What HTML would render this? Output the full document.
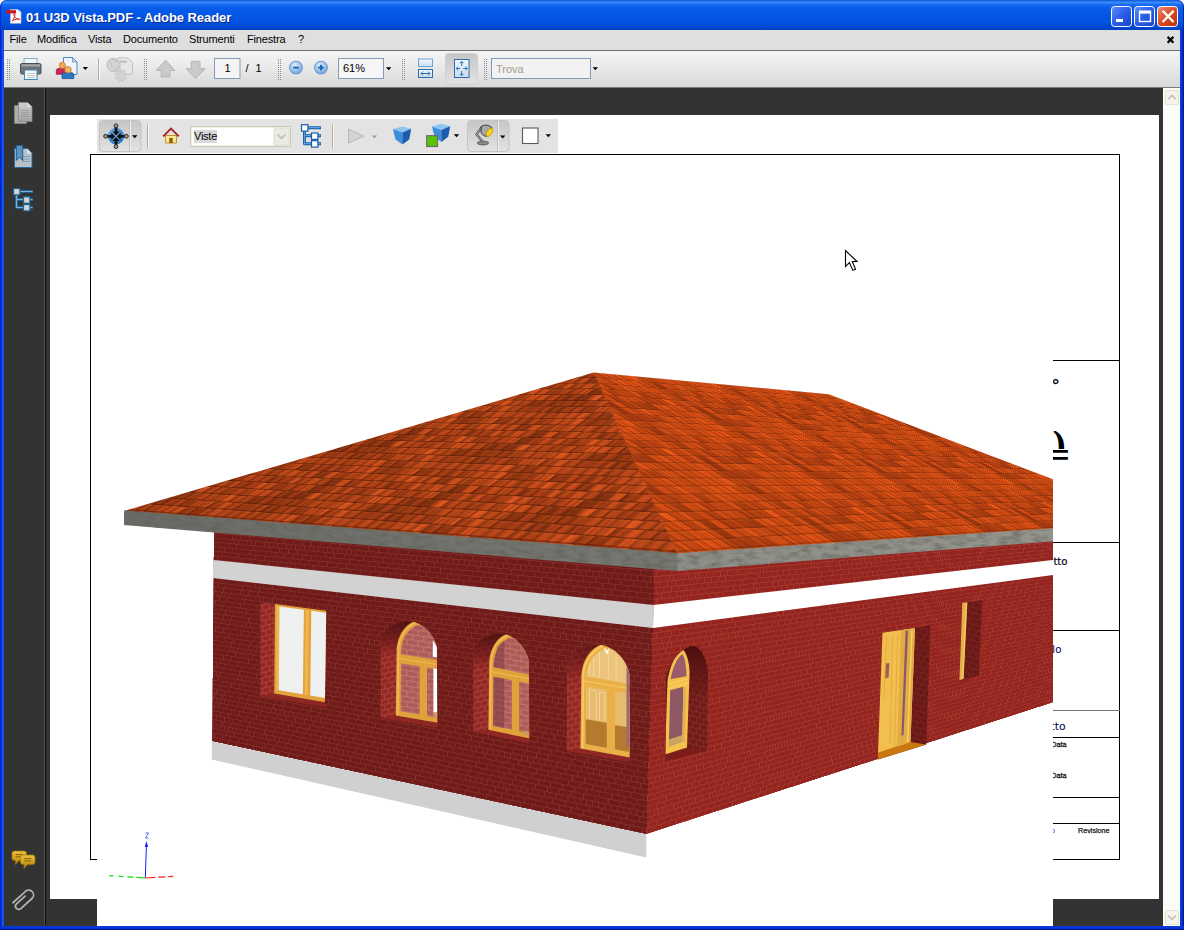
<!DOCTYPE html>
<html lang="it">
<head>
<meta charset="utf-8">
<title>01 U3D Vista.PDF - Adobe Reader</title>
<style>
*{box-sizing:border-box;margin:0;padding:0}
html,body{width:1184px;height:930px;overflow:hidden;background:#0a2fd8}
body{position:relative;font-family:"Liberation Sans",sans-serif;font-size:11px;color:#000}
.abs{position:absolute}
#titlebar{left:0;top:0;width:1184px;height:30px;border-radius:7px 7px 0 0;box-shadow:inset 1px 0 0 #0a2fd0,inset -1px 0 0 #0624b0;
 background:linear-gradient(#0b55d8 0%,#3a8efa 8%,#1a6cf2 15%,#075ce9 26%,#0356e6 50%,#0353e2 72%,#0249d2 90%,#0140c0 100%)}
#title{left:26px;top:9.5px;color:#fff;font-weight:bold;font-size:13px;line-height:16px;white-space:nowrap;text-shadow:1px 1px 0 #0a2a8a;letter-spacing:-.07px}
#lb{left:0;top:30px;width:4px;height:900px;background:linear-gradient(90deg,#0019cf,#0831d9 40%,#166aee 70%,#0a3fd6)}
#rb{left:1180px;top:30px;width:4px;height:900px;background:linear-gradient(90deg,#0a3fd6,#0831d9 50%,#00138c)}
#bb{left:0;top:926px;width:1184px;height:4px;background:linear-gradient(#0a3fd6,#0831d9 50%,#00138c)}
#menubar{left:4px;top:30px;width:1176px;height:20px;background:#dfdfdf}
.mi{position:absolute;top:33px;font-size:11px;line-height:13px;white-space:nowrap;color:#000;letter-spacing:-.16px}
#tbline{left:4px;top:50px;width:1176px;height:1px;background:#6e6e6e}
#toolbar{left:4px;top:51px;width:1176px;height:36px;border-bottom:0;background:linear-gradient(#f4f4f4 0%,#eeeeee 30%,#e2e2e2 70%,#d9d9d9 100%)}
#work{left:4px;top:88px;width:1159px;height:838px;background:#333333}
#navsep1{left:44px;top:88px;width:1px;height:838px;background:#505050}
#navsep2{left:45px;top:88px;width:1px;height:838px;background:#0c0c0c}
#vscroll{left:1163px;top:88px;width:17px;height:838px;background:#fcfcf7}
#page{left:50px;top:115px;width:1109px;height:784px;background:#fff}
.ln{position:absolute;background:#000}
#view3d{left:97px;top:155px;width:956px;height:771px;background:#fff;overflow:hidden}
#v3in{position:absolute;left:-97px;top:-155px;width:1184px;height:930px}
#tb3d{left:97px;top:119px;width:461px;height:34px;background:#e3e3e3}
.grip{position:absolute;width:3px;height:22px;background-image:radial-gradient(circle at 1px 1px,#9a9a9a 0.7px,transparent 1.1px);background-size:2px 2px}
</style>
</head>
<body>
<div class="abs" style="left:0;top:0;width:9px;height:9px;background:#fff"></div><div class="abs" style="left:1175px;top:0;width:9px;height:9px;background:#fff"></div>
<div id="titlebar" class="abs"></div>
<div id="lb" class="abs"></div><div id="rb" class="abs"></div><div id="bb" class="abs"></div>
<div id="title" class="abs">01 U3D Vista.PDF - Adobe Reader</div>
<!--TITLEBTNS-->
<div id="menubar" class="abs"></div>
<span class="mi" style="left:9.5px">File</span>
<span class="mi" style="left:37px">Modifica</span>
<span class="mi" style="left:88px">Vista</span>
<span class="mi" style="left:123px">Documento</span>
<span class="mi" style="left:189px">Strumenti</span>
<span class="mi" style="left:247px">Finestra</span>
<span class="mi" style="left:298px">?</span>
<!--MENUX-->
<div id="tbline" class="abs"></div>
<div id="toolbar" class="abs"></div>
<div class="abs" style="left:4px;top:87px;width:1176px;height:1px;background:#7c7c7c"></div>
<div id="work" class="abs"></div>
<div id="navsep1" class="abs"></div><div id="navsep2" class="abs"></div>
<!--NAVICONS-->
<div id="vscroll" class="abs"></div>
<svg class="abs" style="left:0;top:0" width="1184" height="930" viewBox="0 0 1184 930"><defs>
<linearGradient id="gbtn" x1="0" y1="0" x2="1" y2="1"><stop offset="0" stop-color="#5f8ff8"/><stop offset=".5" stop-color="#2a5de8"/><stop offset="1" stop-color="#1c44c8"/></linearGradient>
<linearGradient id="gcls" x1="0" y1="0" x2="1" y2="1"><stop offset="0" stop-color="#f0907a"/><stop offset=".5" stop-color="#dc4a24"/><stop offset="1" stop-color="#b8300e"/></linearGradient>
<radialGradient id="gzo" cx=".4" cy=".3" r=".8"><stop offset="0" stop-color="#dcecfa"/><stop offset=".55" stop-color="#9cc4ea"/><stop offset="1" stop-color="#5c96d2"/></radialGradient>
<linearGradient id="gsel" x1="0" y1="0" x2="0" y2="1"><stop offset="0" stop-color="#c6c6c6"/><stop offset="1" stop-color="#e2e2e2"/></linearGradient>
<linearGradient id="gpage" x1="0" y1="0" x2="0" y2="1"><stop offset="0" stop-color="#f4f8fc"/><stop offset="1" stop-color="#c9dcee"/></linearGradient>
<linearGradient id="ggold" x1="0" y1="0" x2="0" y2="1"><stop offset="0" stop-color="#ecc040"/><stop offset="1" stop-color="#b5820a"/></linearGradient>
<linearGradient id="gdoc" x1="0" y1="0" x2="0" y2="1"><stop offset="0" stop-color="#d6d6d6"/><stop offset="1" stop-color="#a8a8a8"/></linearGradient>
<radialGradient id="gsph" cx=".4" cy=".35" r=".7"><stop offset="0" stop-color="#7cc0f2"/><stop offset="1" stop-color="#1f6fc0"/></radialGradient>
</defs><path d="M10.5,9.5 h7.5 l3,3 v10.8 h-10.5 z" fill="#fff" stroke="#c8c8c8" stroke-width=".6"/><path d="M18.5,9.5 v3 h3" fill="#e4e4e4"/><rect x="6" y="10.2" width="10" height="3.2" fill="#d01818"/><path d="M12.2,21 c2,-2.6 3,-5.4 2.6,-7.2 c-.4,-1 -1.3,-.4 -1,.8 c.5,2.2 2.6,4.5 5,5.1 c1.4,.2 1.2,-1 -.2,-.9 c-2.6,.2 -5.2,1.2 -6.4,2.2 z" fill="none" stroke="#e02020" stroke-width="1"/><rect x="1111.5" y="6.5" width="20" height="20" rx="3" fill="url(#gbtn)" stroke="#fff" stroke-width="1"/><rect x="1134.5" y="6.5" width="20" height="20" rx="3" fill="url(#gbtn)" stroke="#fff" stroke-width="1"/><rect x="1157.5" y="6.5" width="20" height="20" rx="3" fill="url(#gcls)" stroke="#fff" stroke-width="1"/><rect x="1116" y="19" width="7" height="3" fill="#fff"/><rect x="1139.5" y="11.5" width="11" height="10" fill="none" stroke="#fff" stroke-width="1.4"/><rect x="1139" y="10.6" width="12" height="3" fill="#fff"/><path d="M1163.4,11.6 l9.4,9.6 M1172.8,11.6 l-9.4,9.6" stroke="#fff" stroke-width="2.3" stroke-linecap="square"/><path d="M1167.6,36.9 l5.8,5.8 M1173.4,36.9 l-5.8,5.8" stroke="#000" stroke-width="2.2"/><rect x="7" y="59" width="1" height="1" fill="#8e8e8e"/><rect x="9" y="59" width="1" height="1" fill="#8e8e8e"/><rect x="7" y="61" width="1" height="1" fill="#8e8e8e"/><rect x="9" y="61" width="1" height="1" fill="#8e8e8e"/><rect x="7" y="63" width="1" height="1" fill="#8e8e8e"/><rect x="9" y="63" width="1" height="1" fill="#8e8e8e"/><rect x="7" y="65" width="1" height="1" fill="#8e8e8e"/><rect x="9" y="65" width="1" height="1" fill="#8e8e8e"/><rect x="7" y="67" width="1" height="1" fill="#8e8e8e"/><rect x="9" y="67" width="1" height="1" fill="#8e8e8e"/><rect x="7" y="69" width="1" height="1" fill="#8e8e8e"/><rect x="9" y="69" width="1" height="1" fill="#8e8e8e"/><rect x="7" y="71" width="1" height="1" fill="#8e8e8e"/><rect x="9" y="71" width="1" height="1" fill="#8e8e8e"/><rect x="7" y="73" width="1" height="1" fill="#8e8e8e"/><rect x="9" y="73" width="1" height="1" fill="#8e8e8e"/><rect x="7" y="75" width="1" height="1" fill="#8e8e8e"/><rect x="9" y="75" width="1" height="1" fill="#8e8e8e"/><rect x="7" y="77" width="1" height="1" fill="#8e8e8e"/><rect x="9" y="77" width="1" height="1" fill="#8e8e8e"/><rect x="7" y="79" width="1" height="1" fill="#8e8e8e"/><rect x="9" y="79" width="1" height="1" fill="#8e8e8e"/><rect x="144" y="59" width="1" height="1" fill="#8e8e8e"/><rect x="146" y="59" width="1" height="1" fill="#8e8e8e"/><rect x="144" y="61" width="1" height="1" fill="#8e8e8e"/><rect x="146" y="61" width="1" height="1" fill="#8e8e8e"/><rect x="144" y="63" width="1" height="1" fill="#8e8e8e"/><rect x="146" y="63" width="1" height="1" fill="#8e8e8e"/><rect x="144" y="65" width="1" height="1" fill="#8e8e8e"/><rect x="146" y="65" width="1" height="1" fill="#8e8e8e"/><rect x="144" y="67" width="1" height="1" fill="#8e8e8e"/><rect x="146" y="67" width="1" height="1" fill="#8e8e8e"/><rect x="144" y="69" width="1" height="1" fill="#8e8e8e"/><rect x="146" y="69" width="1" height="1" fill="#8e8e8e"/><rect x="144" y="71" width="1" height="1" fill="#8e8e8e"/><rect x="146" y="71" width="1" height="1" fill="#8e8e8e"/><rect x="144" y="73" width="1" height="1" fill="#8e8e8e"/><rect x="146" y="73" width="1" height="1" fill="#8e8e8e"/><rect x="144" y="75" width="1" height="1" fill="#8e8e8e"/><rect x="146" y="75" width="1" height="1" fill="#8e8e8e"/><rect x="144" y="77" width="1" height="1" fill="#8e8e8e"/><rect x="146" y="77" width="1" height="1" fill="#8e8e8e"/><rect x="144" y="79" width="1" height="1" fill="#8e8e8e"/><rect x="146" y="79" width="1" height="1" fill="#8e8e8e"/><rect x="278" y="59" width="1" height="1" fill="#8e8e8e"/><rect x="280" y="59" width="1" height="1" fill="#8e8e8e"/><rect x="278" y="61" width="1" height="1" fill="#8e8e8e"/><rect x="280" y="61" width="1" height="1" fill="#8e8e8e"/><rect x="278" y="63" width="1" height="1" fill="#8e8e8e"/><rect x="280" y="63" width="1" height="1" fill="#8e8e8e"/><rect x="278" y="65" width="1" height="1" fill="#8e8e8e"/><rect x="280" y="65" width="1" height="1" fill="#8e8e8e"/><rect x="278" y="67" width="1" height="1" fill="#8e8e8e"/><rect x="280" y="67" width="1" height="1" fill="#8e8e8e"/><rect x="278" y="69" width="1" height="1" fill="#8e8e8e"/><rect x="280" y="69" width="1" height="1" fill="#8e8e8e"/><rect x="278" y="71" width="1" height="1" fill="#8e8e8e"/><rect x="280" y="71" width="1" height="1" fill="#8e8e8e"/><rect x="278" y="73" width="1" height="1" fill="#8e8e8e"/><rect x="280" y="73" width="1" height="1" fill="#8e8e8e"/><rect x="278" y="75" width="1" height="1" fill="#8e8e8e"/><rect x="280" y="75" width="1" height="1" fill="#8e8e8e"/><rect x="278" y="77" width="1" height="1" fill="#8e8e8e"/><rect x="280" y="77" width="1" height="1" fill="#8e8e8e"/><rect x="278" y="79" width="1" height="1" fill="#8e8e8e"/><rect x="280" y="79" width="1" height="1" fill="#8e8e8e"/><rect x="402" y="59" width="1" height="1" fill="#8e8e8e"/><rect x="404" y="59" width="1" height="1" fill="#8e8e8e"/><rect x="402" y="61" width="1" height="1" fill="#8e8e8e"/><rect x="404" y="61" width="1" height="1" fill="#8e8e8e"/><rect x="402" y="63" width="1" height="1" fill="#8e8e8e"/><rect x="404" y="63" width="1" height="1" fill="#8e8e8e"/><rect x="402" y="65" width="1" height="1" fill="#8e8e8e"/><rect x="404" y="65" width="1" height="1" fill="#8e8e8e"/><rect x="402" y="67" width="1" height="1" fill="#8e8e8e"/><rect x="404" y="67" width="1" height="1" fill="#8e8e8e"/><rect x="402" y="69" width="1" height="1" fill="#8e8e8e"/><rect x="404" y="69" width="1" height="1" fill="#8e8e8e"/><rect x="402" y="71" width="1" height="1" fill="#8e8e8e"/><rect x="404" y="71" width="1" height="1" fill="#8e8e8e"/><rect x="402" y="73" width="1" height="1" fill="#8e8e8e"/><rect x="404" y="73" width="1" height="1" fill="#8e8e8e"/><rect x="402" y="75" width="1" height="1" fill="#8e8e8e"/><rect x="404" y="75" width="1" height="1" fill="#8e8e8e"/><rect x="402" y="77" width="1" height="1" fill="#8e8e8e"/><rect x="404" y="77" width="1" height="1" fill="#8e8e8e"/><rect x="402" y="79" width="1" height="1" fill="#8e8e8e"/><rect x="404" y="79" width="1" height="1" fill="#8e8e8e"/><rect x="484" y="59" width="1" height="1" fill="#8e8e8e"/><rect x="486" y="59" width="1" height="1" fill="#8e8e8e"/><rect x="484" y="61" width="1" height="1" fill="#8e8e8e"/><rect x="486" y="61" width="1" height="1" fill="#8e8e8e"/><rect x="484" y="63" width="1" height="1" fill="#8e8e8e"/><rect x="486" y="63" width="1" height="1" fill="#8e8e8e"/><rect x="484" y="65" width="1" height="1" fill="#8e8e8e"/><rect x="486" y="65" width="1" height="1" fill="#8e8e8e"/><rect x="484" y="67" width="1" height="1" fill="#8e8e8e"/><rect x="486" y="67" width="1" height="1" fill="#8e8e8e"/><rect x="484" y="69" width="1" height="1" fill="#8e8e8e"/><rect x="486" y="69" width="1" height="1" fill="#8e8e8e"/><rect x="484" y="71" width="1" height="1" fill="#8e8e8e"/><rect x="486" y="71" width="1" height="1" fill="#8e8e8e"/><rect x="484" y="73" width="1" height="1" fill="#8e8e8e"/><rect x="486" y="73" width="1" height="1" fill="#8e8e8e"/><rect x="484" y="75" width="1" height="1" fill="#8e8e8e"/><rect x="486" y="75" width="1" height="1" fill="#8e8e8e"/><rect x="484" y="77" width="1" height="1" fill="#8e8e8e"/><rect x="486" y="77" width="1" height="1" fill="#8e8e8e"/><rect x="484" y="79" width="1" height="1" fill="#8e8e8e"/><rect x="486" y="79" width="1" height="1" fill="#8e8e8e"/><rect x="24" y="58.5" width="13" height="7" fill="#f2f6f8" stroke="#7ab4cc" stroke-width="1"/><rect x="20.5" y="63.5" width="20.5" height="10.5" rx="1.5" fill="#6e7276" stroke="#4a4e52" stroke-width="1"/><rect x="21.5" y="64.3" width="18.5" height="2.2" fill="#a2a6aa"/><rect x="24.5" y="70" width="12.5" height="9.5" fill="#f4f6f8" stroke="#3a8cb4" stroke-width="1"/><path d="M27,73.5 h8 M27,75.5 h8 M27,77.5 h8" stroke="#b8c0c8" stroke-width=".8"/><path d="M63.5,57.5 h9 l4.5,4.5 v12.5 h-13.5 z" fill="#eef4fc" stroke="#4a8ac8" stroke-width="1"/><path d="M72.5,57.5 v4.5 h4.5 z" fill="#c4d8f0" stroke="#4a8ac8" stroke-width=".7"/><path d="M56.3,74.3 v-3.4 q0,-2.6 3,-2.6 h4.4 q3,0 3,2.6 v3.4 z" fill="#c82858" stroke="#8e1438" stroke-width=".7"/><circle cx="62.4" cy="65.4" r="3.1" fill="#f4a858" stroke="#c07020" stroke-width=".7"/><path d="M62,78.6 v-3.4 q0,-2.6 3,-2.6 h5.8 q3,0 3,2.6 v3.4 z" fill="#2a78c0" stroke="#0e4a8a" stroke-width=".7"/><circle cx="68" cy="69.8" r="3.3" fill="#f6b060" stroke="#c07020" stroke-width=".7"/><path d="M82.6,67 h5.4 l-2.7,3 z" fill="#000"/><rect x="98" y="58.5" width="1" height="22" fill="#b4ac9c"/><rect x="99" y="58.5" width="1" height="22" fill="#f8f8f8"/><path d="M118,57.8 h10 l4.5,4.5 v12 h-14.5 z" fill="#e6e6e6" stroke="#c4c4c4" stroke-width="1"/><rect x="120" y="60.5" width="7" height="2.4" fill="#c0c0c0"/><circle cx="113.5" cy="65" r="6.6" fill="#d4d4d4" stroke="#bcbcbc" stroke-width="1"/><path d="M109,62 q4,2 3,6 M113,58.6 q3,4 5,3 M115,70 q1,-3 4,-3" stroke="#c0c0c0" fill="none" stroke-width="1"/><path d="M120.5,68.4 l1.6,2.4 l2.8,-.9 l-.2,2.9 l2.7,1.1 l-2,2.1 l1.4,2.6 l-2.9,.3 l-.6,2.9 l-2.4,-1.7 l-2.4,1.7 l-.6,-2.9 l-2.9,-.3 l1.4,-2.6 l-2,-2.1 l2.7,-1.1 l-.2,-2.9 l2.8,.9 z" fill="#d2d2d2" stroke="#c0c0c0" stroke-width=".6"/><path d="M165.6,60.2 l9.4,10.3 h-5 v6.4 h-8.8 v-6.4 h-5 z" fill="#cacaca" stroke="#b4b4b4" stroke-width="1" stroke-linejoin="round"/><path d="M195.6,78.5 l9.4,-9.8 h-5 v-7.4 h-8.8 v7.4 h-5 z" fill="#cacaca" stroke="#b4b4b4" stroke-width="1" stroke-linejoin="round"/><rect x="214.5" y="58.5" width="25.5" height="20" fill="#f4f4f4" stroke="#7f9db9" stroke-width="1"/><circle cx="296" cy="67.6" r="6.4" fill="url(#gzo)" stroke="#6b9cd0" stroke-width="1.1"/><rect x="293.2" y="66.7" width="5.6" height="1.9" fill="#1f5fae"/><circle cx="321" cy="67.6" r="6.4" fill="url(#gzo)" stroke="#6b9cd0" stroke-width="1.1"/><rect x="318.2" y="66.7" width="5.6" height="1.9" fill="#1f5fae"/><rect x="320.05" y="64.8" width="1.9" height="5.6" fill="#1f5fae"/><rect x="338.5" y="58.5" width="45" height="20" fill="#f6f6f6" stroke="#7f9db9" stroke-width="1"/><path d="M386,67.2 h5.4 l-2.7,3 z" fill="#000"/><rect x="418.5" y="59" width="14" height="7.6" fill="url(#gpage)" stroke="#6aa4d8" stroke-width="1"/><rect x="418.5" y="69.5" width="14" height="8" fill="url(#gpage)" stroke="#2a6cb0" stroke-width="1"/><path d="M421,73.5 h9 M423,71.5 l-2,2 l2,2 M428,71.5 l2,2 l-2,2" stroke="#2a6cb0" stroke-width="1" fill="none"/><rect x="445.5" y="53.5" width="32" height="30.5" rx="3" fill="url(#gsel)" stroke="#d0d0d0" stroke-width="1"/><rect x="454.5" y="59.5" width="14.5" height="18" fill="url(#gpage)" stroke="#2a6cb0" stroke-width="1"/><path d="M461.7,61.5 v4.5 M459.8,63.3 l1.9,-1.9 l1.9,1.9 M461.7,75.5 v-4.5 M459.8,73.7 l1.9,1.9 l1.9,-1.9 M456.3,68.5 h4 M458.1,66.6 l-1.9,1.9 l1.9,1.9 M467.2,68.5 h-4 M465.4,66.6 l1.9,1.9 l-1.9,1.9" stroke="#2a6cb0" stroke-width="1" fill="none"/><rect x="491.5" y="58.5" width="99" height="20" fill="#f2f2f2" stroke="#7f9db9" stroke-width="1"/><path d="M592.6,67.2 h5.4 l-2.7,3 z" fill="#000"/><g opacity=".95"><path d="M14.5,105.5 h12 v18 h-12 z" fill="#b4b4b4" stroke="#8a8a8a" stroke-width=".8"/><path d="M18.5,102.5 h9 l4.5,4.5 v14.5 h-13.5 z" fill="url(#gdoc)" stroke="#8e8e8e" stroke-width=".8"/><path d="M27.5,102.5 v4.5 h4.5 z" fill="#e8e8e8"/><path d="M21,110.5 h8 M21,112.5 h8 M21,114.5 h8 M21,116.5 h8" stroke="#9a9a9a" stroke-width=".8"/></g><path d="M14.5,148.5 h12.5 l5,5 v14 h-17.5 z" fill="#b8c0c8" stroke="#2a6a9a" stroke-width="1"/><path d="M27,148.5 v5 h5 z" fill="#dde4ea"/><path d="M22,156.5 h8 M22,159 h8 M22,161.5 h8" stroke="#7a9ab8" stroke-width=".9"/><path d="M16.3,145.5 h6.4 v15 l-3.2,-3.2 l-3.2,3.2 z" fill="#5a94bc" stroke="#1f5f8e" stroke-width="1"/><path d="M20,191.5 h13 M16.5,195 v13.5 M16.5,199.5 h7 M16.5,207.5 h7 M29.5,199.5 h3.5 M29.5,207.5 h3.5" stroke="#1f6494" stroke-width="3" fill="none"/><path d="M20,191.5 h12.4 M16.5,195 v13 M16.5,199.5 h7 M16.5,207.5 h7 M29.5,199.5 h3 M29.5,207.5 h3" stroke="#7ab0d8" stroke-width="1.2" fill="none"/><rect x="13.5" y="188.5" width="6.4" height="6.4" fill="#d4d4d4" stroke="#1f6494" stroke-width="1.2"/><rect x="23.5" y="196.8" width="6.4" height="6.4" fill="#d4d4d4" stroke="#1f6494" stroke-width="1.2"/><rect x="23.5" y="204.5" width="6.4" height="6.4" fill="#d4d4d4" stroke="#1f6494" stroke-width="1.2"/><path d="M14.5,851 h9.5 q2.5,0 2.5,2.5 v4.4 q0,2.5 -2.5,2.5 h-5 l-3.6,4 l.4,-4 h-1.3 q-2.5,0 -2.5,-2.5 v-4.4 q0,-2.5 2.5,-2.5 z" fill="url(#ggold)" stroke="#a87808" stroke-width=".7"/><path d="M15.7,854.6 h7 M15.7,856.8 h7" stroke="#8a6204" stroke-width="1"/><path d="M23,855 h9.5 q2.5,0 2.5,2.5 v4.4 q0,2.5 -2.5,2.5 h-5 l-3.6,4 l.4,-4 h-1.3 q-2.5,0 -2.5,-2.5 v-4.4 q0,-2.5 2.5,-2.5 z" fill="url(#ggold)" stroke="#a87808" stroke-width=".7"/><path d="M24.2,858.6 h7 M24.2,860.8 h7" stroke="#8a6204" stroke-width="1"/><g transform="rotate(-42 23 902)" fill="none" stroke="#b4b4b4" stroke-width="1.7" stroke-linecap="round"><path d="M28.5,899 h-11.5 a3.2,3.2 0 0 0 0,6.4 h15 a4.8,4.8 0 0 0 0,-9.6 h-17"/></g><rect x="1165.5" y="90.5" width="13" height="14" rx="1.5" fill="#f4f4ec" stroke="#e2e2d8" stroke-width="1"/><path d="M1168.2,99.2 l3.8,-3.8 l3.8,3.8" stroke="#c4c4ba" stroke-width="1.8" fill="none"/><rect x="1165.5" y="910.5" width="13" height="14" rx="1.5" fill="#f4f4ec" stroke="#e2e2d8" stroke-width="1"/><path d="M1168.2,915.6 l3.8,3.8 l3.8,-3.8" stroke="#c4c4ba" stroke-width="1.8" fill="none"/></svg><span class="abs" style="left:215px;top:62px;width:25px;text-align:center;font-size:11px;line-height:13px">1</span><span class="abs" style="left:245.5px;top:62px;font-size:11px;line-height:13px">/</span><span class="abs" style="left:255.6px;top:62px;font-size:11px;line-height:13px">1</span><span class="abs" style="left:343px;top:62px;font-size:11px;line-height:13px">61%</span><span class="abs" style="left:496px;top:63px;font-size:11px;line-height:13px;color:#a39d8b">Trova</span>
<div id="page" class="abs"></div>
<div class="ln" style="left:90px;top:154px;width:1030px;height:1px;background:#000"></div><div class="ln" style="left:90px;top:859px;width:1030px;height:1px;background:#000"></div><div class="ln" style="left:90px;top:154px;width:1px;height:706px;background:#000"></div><div class="ln" style="left:1119px;top:154px;width:1px;height:706px;background:#000"></div><div class="ln" style="left:1040px;top:360px;width:80px;height:1px;background:#000"></div><div class="ln" style="left:1040px;top:542px;width:80px;height:1px;background:#000"></div><div class="ln" style="left:1040px;top:630px;width:80px;height:1px;background:#000"></div><div class="ln" style="left:1040px;top:710px;width:80px;height:1px;background:#777"></div><div class="ln" style="left:1040px;top:737px;width:80px;height:1px;background:#000"></div><div class="ln" style="left:1040px;top:797px;width:80px;height:1px;background:#000"></div><div class="ln" style="left:1040px;top:823px;width:80px;height:1px;background:#000"></div><span class="abs" style="right:116.4px;top:555.708px;font-family:'DejaVu Sans','Liberation Sans',sans-serif;font-size:10.2px;line-height:12.24px;color:#06061c;white-space:nowrap;-webkit-text-stroke:.2px #06061c">Progetto</span><span class="abs" style="right:122.6px;top:643.808px;font-family:'DejaVu Sans','Liberation Sans',sans-serif;font-size:10.2px;line-height:12.24px;color:#000058;white-space:nowrap;">Titolo</span><span class="abs" style="right:118.4px;top:721.032px;font-family:'DejaVu Sans','Liberation Sans',sans-serif;font-size:10.8px;line-height:12.96px;color:#000040;white-space:nowrap;">Oggetto</span><span class="abs" style="right:117.6px;top:740.788px;font-family:'Liberation Sans',sans-serif;font-size:7.2px;line-height:8.64px;color:#1a1a1a;white-space:nowrap;-webkit-text-stroke:.3px #1a1a1a">Data</span><span class="abs" style="right:117.6px;top:771.788px;font-family:'Liberation Sans',sans-serif;font-size:7.2px;line-height:8.64px;color:#1a1a1a;white-space:nowrap;-webkit-text-stroke:.3px #1a1a1a">Data</span><span class="abs" style="right:74.4px;top:827.088px;font-family:'Liberation Sans',sans-serif;font-size:7.2px;line-height:8.64px;color:#1a1a1a;white-space:nowrap;-webkit-text-stroke:.25px #1a1a1a">Revisione</span><span class="abs" style="right:129px;top:827.088px;font-family:'Liberation Sans',sans-serif;font-size:7.2px;line-height:8.64px;color:#1030b0;white-space:nowrap;">Foglio</span><span class="abs" style="left:1052.2px;top:375.8px;font-family:'Liberation Serif',serif;font-size:17px;line-height:17px;color:#000;-webkit-text-stroke:.45px #000">°</span><div class="abs" style="left:1050px;top:431px;width:24px;height:17.6px;overflow:hidden"><span class="abs" style="left:2.5px;top:-4.5px;font-family:'Liberation Serif',serif;font-size:40px;line-height:36px;color:#000;font-weight:bold">)</span></div><span class="abs" style="left:1051px;top:437.4px;font-family:'Liberation Sans',sans-serif;font-size:31px;line-height:36px;color:#000;font-weight:bold;transform:scaleY(.86)">=</span>
<div id="view3d" class="abs"><div id="v3in">
<svg class="abs" style="left:0;top:0;transform-origin:0 0;transform:matrix3d(0.339112859,-0.0947765137,0,-0.000240572396,0.00125600355,0.460101408,0,2.32138416e-05,0,0,1,0,213.796012,524.231867,0,1)" width="888" height="490" viewBox="0 0 888 490"><defs><pattern id="wlp" width="126" height="60" patternUnits="userSpaceOnUse"><rect width="126" height="60" fill="#84312a"/><rect x="-20.2" y="0.8" width="19.5" height="8.5" fill="#6f1b1a"/><rect x="0.8" y="0.8" width="19.5" height="8.5" fill="#6f1b1a"/><rect x="21.8" y="0.8" width="19.5" height="8.5" fill="#6f1b1a"/><rect x="42.8" y="0.8" width="19.5" height="8.5" fill="#6f1b1a"/><rect x="63.8" y="0.8" width="19.5" height="8.5" fill="#6f1b1a"/><rect x="84.8" y="0.8" width="19.5" height="8.5" fill="#6f1b1a"/><rect x="105.8" y="0.8" width="19.5" height="8.5" fill="#6f1b1a"/><rect x="126.8" y="0.8" width="19.5" height="8.5" fill="#6f1b1a"/><rect x="-9.8" y="10.8" width="19.5" height="8.5" fill="#6f1b1a"/><rect x="11.2" y="10.8" width="19.5" height="8.5" fill="#6f1b1a"/><rect x="32.2" y="10.8" width="19.5" height="8.5" fill="#6f1b1a"/><rect x="53.2" y="10.8" width="19.5" height="8.5" fill="#6f1b1a"/><rect x="74.2" y="10.8" width="19.5" height="8.5" fill="#6f1b1a"/><rect x="95.2" y="10.8" width="19.5" height="8.5" fill="#6f1b1a"/><rect x="116.2" y="10.8" width="19.5" height="8.5" fill="#6f1b1a"/><rect x="137.2" y="10.8" width="19.5" height="8.5" fill="#6f1b1a"/><rect x="-15.0" y="20.8" width="19.5" height="8.5" fill="#6f1b1a"/><rect x="6.0" y="20.8" width="19.5" height="8.5" fill="#6f1b1a"/><rect x="27.0" y="20.8" width="19.5" height="8.5" fill="#6f1b1a"/><rect x="48.0" y="20.8" width="19.5" height="8.5" fill="#6f1b1a"/><rect x="69.0" y="20.8" width="19.5" height="8.5" fill="#6f1b1a"/><rect x="90.0" y="20.8" width="19.5" height="8.5" fill="#6f1b1a"/><rect x="111.0" y="20.8" width="19.5" height="8.5" fill="#6f1b1a"/><rect x="132.0" y="20.8" width="19.5" height="8.5" fill="#6f1b1a"/><rect x="-9.8" y="30.8" width="9.0" height="8.5" fill="#6f1b1a"/><rect x="0.8" y="30.8" width="9.0" height="8.5" fill="#6f1b1a"/><rect x="11.2" y="30.8" width="9.0" height="8.5" fill="#6f1b1a"/><rect x="21.8" y="30.8" width="9.0" height="8.5" fill="#6f1b1a"/><rect x="32.2" y="30.8" width="9.0" height="8.5" fill="#6f1b1a"/><rect x="42.8" y="30.8" width="9.0" height="8.5" fill="#6f1b1a"/><rect x="53.2" y="30.8" width="9.0" height="8.5" fill="#6f1b1a"/><rect x="63.8" y="30.8" width="9.0" height="8.5" fill="#6f1b1a"/><rect x="74.2" y="30.8" width="9.0" height="8.5" fill="#6f1b1a"/><rect x="84.8" y="30.8" width="9.0" height="8.5" fill="#6f1b1a"/><rect x="95.2" y="30.8" width="9.0" height="8.5" fill="#6f1b1a"/><rect x="105.8" y="30.8" width="9.0" height="8.5" fill="#6f1b1a"/><rect x="116.2" y="30.8" width="9.0" height="8.5" fill="#6f1b1a"/><rect x="126.8" y="30.8" width="9.0" height="8.5" fill="#6f1b1a"/><rect x="-4.5" y="40.8" width="19.5" height="8.5" fill="#6f1b1a"/><rect x="16.5" y="40.8" width="19.5" height="8.5" fill="#6f1b1a"/><rect x="37.5" y="40.8" width="19.5" height="8.5" fill="#6f1b1a"/><rect x="58.5" y="40.8" width="19.5" height="8.5" fill="#6f1b1a"/><rect x="79.5" y="40.8" width="19.5" height="8.5" fill="#6f1b1a"/><rect x="100.5" y="40.8" width="19.5" height="8.5" fill="#6f1b1a"/><rect x="121.5" y="40.8" width="19.5" height="8.5" fill="#6f1b1a"/><rect x="142.5" y="40.8" width="19.5" height="8.5" fill="#6f1b1a"/><rect x="-13.9" y="50.8" width="19.5" height="8.5" fill="#6f1b1a"/><rect x="7.0" y="50.8" width="19.5" height="8.5" fill="#6f1b1a"/><rect x="28.1" y="50.8" width="19.5" height="8.5" fill="#6f1b1a"/><rect x="49.0" y="50.8" width="19.5" height="8.5" fill="#6f1b1a"/><rect x="70.0" y="50.8" width="19.5" height="8.5" fill="#6f1b1a"/><rect x="91.0" y="50.8" width="19.5" height="8.5" fill="#6f1b1a"/><rect x="112.0" y="50.8" width="19.5" height="8.5" fill="#6f1b1a"/><rect x="133.1" y="50.8" width="19.5" height="8.5" fill="#6f1b1a"/></pattern></defs><rect width="888" height="490" fill="url(#wlp)"/></svg><svg class="abs" style="left:0;top:0;transform-origin:0 0;transform:matrix3d(0.684184373,0.191780155,0,0.000396161862,0.00150034203,0.584962005,0,2.93699669e-05,0,0,1,0,654.8152,559.624546,0,1)" width="1560" height="490" viewBox="0 0 1560 490"><defs><pattern id="wrp" width="111" height="60" patternUnits="userSpaceOnUse"><rect width="111" height="60" fill="#a73b2d"/><rect x="-17.8" y="0.8" width="17.0" height="8.5" fill="#93241f"/><rect x="0.8" y="0.8" width="17.0" height="8.5" fill="#93241f"/><rect x="19.2" y="0.8" width="17.0" height="8.5" fill="#93241f"/><rect x="37.8" y="0.8" width="17.0" height="8.5" fill="#93241f"/><rect x="56.2" y="0.8" width="17.0" height="8.5" fill="#93241f"/><rect x="74.8" y="0.8" width="17.0" height="8.5" fill="#93241f"/><rect x="93.2" y="0.8" width="17.0" height="8.5" fill="#93241f"/><rect x="111.8" y="0.8" width="17.0" height="8.5" fill="#93241f"/><rect x="-8.5" y="10.8" width="17.0" height="8.5" fill="#93241f"/><rect x="10.0" y="10.8" width="17.0" height="8.5" fill="#93241f"/><rect x="28.5" y="10.8" width="17.0" height="8.5" fill="#93241f"/><rect x="47.0" y="10.8" width="17.0" height="8.5" fill="#93241f"/><rect x="65.5" y="10.8" width="17.0" height="8.5" fill="#93241f"/><rect x="84.0" y="10.8" width="17.0" height="8.5" fill="#93241f"/><rect x="102.5" y="10.8" width="17.0" height="8.5" fill="#93241f"/><rect x="121.0" y="10.8" width="17.0" height="8.5" fill="#93241f"/><rect x="-13.1" y="20.8" width="17.0" height="8.5" fill="#93241f"/><rect x="5.4" y="20.8" width="17.0" height="8.5" fill="#93241f"/><rect x="23.9" y="20.8" width="17.0" height="8.5" fill="#93241f"/><rect x="42.4" y="20.8" width="17.0" height="8.5" fill="#93241f"/><rect x="60.9" y="20.8" width="17.0" height="8.5" fill="#93241f"/><rect x="79.4" y="20.8" width="17.0" height="8.5" fill="#93241f"/><rect x="97.9" y="20.8" width="17.0" height="8.5" fill="#93241f"/><rect x="116.4" y="20.8" width="17.0" height="8.5" fill="#93241f"/><rect x="-8.5" y="30.8" width="7.8" height="8.5" fill="#93241f"/><rect x="0.8" y="30.8" width="7.8" height="8.5" fill="#93241f"/><rect x="10.0" y="30.8" width="7.8" height="8.5" fill="#93241f"/><rect x="19.2" y="30.8" width="7.8" height="8.5" fill="#93241f"/><rect x="28.5" y="30.8" width="7.8" height="8.5" fill="#93241f"/><rect x="37.8" y="30.8" width="7.8" height="8.5" fill="#93241f"/><rect x="47.0" y="30.8" width="7.8" height="8.5" fill="#93241f"/><rect x="56.2" y="30.8" width="7.8" height="8.5" fill="#93241f"/><rect x="65.5" y="30.8" width="7.8" height="8.5" fill="#93241f"/><rect x="74.8" y="30.8" width="7.8" height="8.5" fill="#93241f"/><rect x="84.0" y="30.8" width="7.8" height="8.5" fill="#93241f"/><rect x="93.2" y="30.8" width="7.8" height="8.5" fill="#93241f"/><rect x="102.5" y="30.8" width="7.8" height="8.5" fill="#93241f"/><rect x="111.8" y="30.8" width="7.8" height="8.5" fill="#93241f"/><rect x="-3.9" y="40.8" width="17.0" height="8.5" fill="#93241f"/><rect x="14.6" y="40.8" width="17.0" height="8.5" fill="#93241f"/><rect x="33.1" y="40.8" width="17.0" height="8.5" fill="#93241f"/><rect x="51.6" y="40.8" width="17.0" height="8.5" fill="#93241f"/><rect x="70.1" y="40.8" width="17.0" height="8.5" fill="#93241f"/><rect x="88.6" y="40.8" width="17.0" height="8.5" fill="#93241f"/><rect x="107.1" y="40.8" width="17.0" height="8.5" fill="#93241f"/><rect x="125.6" y="40.8" width="17.0" height="8.5" fill="#93241f"/><rect x="-12.2" y="50.8" width="17.0" height="8.5" fill="#93241f"/><rect x="6.3" y="50.8" width="17.0" height="8.5" fill="#93241f"/><rect x="24.8" y="50.8" width="17.0" height="8.5" fill="#93241f"/><rect x="43.3" y="50.8" width="17.0" height="8.5" fill="#93241f"/><rect x="61.8" y="50.8" width="17.0" height="8.5" fill="#93241f"/><rect x="80.3" y="50.8" width="17.0" height="8.5" fill="#93241f"/><rect x="98.8" y="50.8" width="17.0" height="8.5" fill="#93241f"/><rect x="117.3" y="50.8" width="17.0" height="8.5" fill="#93241f"/></pattern></defs><rect width="1560" height="490" fill="url(#wrp)"/></svg><svg class="abs" style="left:0;top:0" width="1184" height="930"><polygon points="124.00,511.00 593.75,372.50 828.75,394.25 1167.00,521.10 677.50,553.75" fill="#bf4715"/></svg><svg class="abs" style="left:0;top:0;transform-origin:0 0;transform:matrix3d(0.563800633,-0.156022044,0,-0.000398002715,-0.831438516,0.203463745,0,-0.000451296846,0,0,1,0,378.205515,372.802332,0,1.03397198)" width="650" height="354" viewBox="-40 -40 650 354"><defs><pattern id="rlp" width="138" height="104" patternUnits="userSpaceOnUse"><rect width="138" height="104" fill="#ba4618"/><rect x="-8.62" y="0.00" width="3.02" height="13.10" fill="#863310"/><rect x="-5.75" y="0.00" width="3.02" height="13.10" fill="#bf4817"/><rect x="-2.88" y="0.00" width="3.02" height="13.10" fill="#af4215"/><rect x="0.00" y="0.00" width="3.02" height="13.10" fill="#b64516"/><rect x="2.88" y="0.00" width="3.02" height="13.10" fill="#7b2d0f"/><rect x="5.75" y="0.00" width="3.02" height="13.10" fill="#a43c14"/><rect x="8.62" y="0.00" width="3.02" height="13.10" fill="#b44216"/><rect x="11.50" y="0.00" width="3.02" height="13.10" fill="#943612"/><rect x="14.38" y="0.00" width="3.02" height="13.10" fill="#833010"/><rect x="17.25" y="0.00" width="3.02" height="13.10" fill="#933612"/><rect x="20.12" y="0.00" width="3.02" height="13.10" fill="#b94416"/><rect x="23.00" y="0.00" width="3.02" height="13.10" fill="#bf4717"/><rect x="25.88" y="0.00" width="3.02" height="13.10" fill="#833010"/><rect x="28.75" y="0.00" width="3.02" height="13.10" fill="#a13b13"/><rect x="31.62" y="0.00" width="3.02" height="13.10" fill="#943612"/><rect x="34.50" y="0.00" width="3.02" height="13.10" fill="#bb4516"/><rect x="37.38" y="0.00" width="3.02" height="13.10" fill="#913713"/><rect x="40.25" y="0.00" width="3.02" height="13.10" fill="#af4217"/><rect x="43.12" y="0.00" width="3.02" height="13.10" fill="#c84b1a"/><rect x="46.00" y="0.00" width="3.02" height="13.10" fill="#cd4d1b"/><rect x="48.88" y="0.00" width="3.02" height="13.10" fill="#913713"/><rect x="51.75" y="0.00" width="3.02" height="13.10" fill="#bf4819"/><rect x="54.62" y="0.00" width="3.02" height="13.10" fill="#c84b1a"/><rect x="57.50" y="0.00" width="3.02" height="13.10" fill="#b44417"/><rect x="60.38" y="0.00" width="3.02" height="13.10" fill="#a13e16"/><rect x="63.25" y="0.00" width="3.02" height="13.10" fill="#d2511c"/><rect x="66.12" y="0.00" width="3.02" height="13.10" fill="#e7591f"/><rect x="69.00" y="0.00" width="3.02" height="13.10" fill="#c24b1a"/><rect x="71.88" y="0.00" width="3.02" height="13.10" fill="#7b2d0f"/><rect x="74.75" y="0.00" width="3.02" height="13.10" fill="#b44216"/><rect x="77.62" y="0.00" width="3.02" height="13.10" fill="#963712"/><rect x="80.50" y="0.00" width="3.02" height="13.10" fill="#8b3311"/><rect x="83.38" y="0.00" width="3.02" height="13.10" fill="#863310"/><rect x="86.25" y="0.00" width="3.02" height="13.10" fill="#953812"/><rect x="89.12" y="0.00" width="3.02" height="13.10" fill="#9d3b13"/><rect x="92.00" y="0.00" width="3.02" height="13.10" fill="#a83f14"/><rect x="94.88" y="0.00" width="3.02" height="13.10" fill="#8b3511"/><rect x="97.75" y="0.00" width="3.02" height="13.10" fill="#a13d14"/><rect x="100.62" y="0.00" width="3.02" height="13.10" fill="#9b3b13"/><rect x="103.50" y="0.00" width="3.02" height="13.10" fill="#c44b18"/><rect x="106.38" y="0.00" width="3.02" height="13.10" fill="#a13e16"/><rect x="109.25" y="0.00" width="3.02" height="13.10" fill="#c74d1b"/><rect x="112.12" y="0.00" width="3.02" height="13.10" fill="#ba4819"/><rect x="115.00" y="0.00" width="3.02" height="13.10" fill="#e4581f"/><rect x="117.88" y="0.00" width="3.02" height="13.10" fill="#722a0d"/><rect x="120.75" y="0.00" width="3.02" height="13.10" fill="#903511"/><rect x="123.62" y="0.00" width="3.02" height="13.10" fill="#933611"/><rect x="126.50" y="0.00" width="3.02" height="13.10" fill="#983812"/><rect x="129.38" y="0.00" width="3.02" height="13.10" fill="#863310"/><rect x="132.25" y="0.00" width="3.02" height="13.10" fill="#993a13"/><rect x="135.12" y="0.00" width="3.02" height="13.10" fill="#c34a18"/><rect x="138.00" y="0.00" width="3.02" height="13.10" fill="#bb4717"/><rect x="140.88" y="0.00" width="3.02" height="13.10" fill="#8b3511"/><rect x="143.75" y="0.00" width="3.02" height="13.10" fill="#af4316"/><rect x="146.62" y="0.00" width="3.02" height="13.10" fill="#bd4817"/><rect x="149.50" y="0.00" width="3.02" height="13.10" fill="#a53f14"/><rect x="-8.62" y="13.00" width="3.02" height="13.10" fill="#722a0d"/><rect x="-5.75" y="13.00" width="3.02" height="13.10" fill="#a63d13"/><rect x="-2.88" y="13.00" width="3.02" height="13.10" fill="#933611"/><rect x="0.00" y="13.00" width="3.02" height="13.10" fill="#943711"/><rect x="2.88" y="13.00" width="3.02" height="13.10" fill="#913713"/><rect x="5.75" y="13.00" width="3.02" height="13.10" fill="#c94c1a"/><rect x="8.62" y="13.00" width="3.02" height="13.10" fill="#d3501b"/><rect x="11.50" y="13.00" width="3.02" height="13.10" fill="#b04217"/><rect x="14.38" y="13.00" width="3.02" height="13.10" fill="#722a0d"/><rect x="17.25" y="13.00" width="3.02" height="13.10" fill="#973812"/><rect x="20.12" y="13.00" width="3.02" height="13.10" fill="#973812"/><rect x="23.00" y="13.00" width="3.02" height="13.10" fill="#802f0f"/><rect x="25.88" y="13.00" width="3.02" height="13.10" fill="#a13e16"/><rect x="28.75" y="13.00" width="3.02" height="13.10" fill="#cd4f1c"/><rect x="31.62" y="13.00" width="3.02" height="13.10" fill="#d9541d"/><rect x="34.50" y="13.00" width="3.02" height="13.10" fill="#c64d1b"/><rect x="37.38" y="13.00" width="3.02" height="13.10" fill="#8b3511"/><rect x="40.25" y="13.00" width="3.02" height="13.10" fill="#be4917"/><rect x="43.12" y="13.00" width="3.02" height="13.10" fill="#9a3b13"/><rect x="46.00" y="13.00" width="3.02" height="13.10" fill="#9c3c13"/><rect x="48.88" y="13.00" width="3.02" height="13.10" fill="#913713"/><rect x="51.75" y="13.00" width="3.02" height="13.10" fill="#d24f1b"/><rect x="54.62" y="13.00" width="3.02" height="13.10" fill="#ad4116"/><rect x="57.50" y="13.00" width="3.02" height="13.10" fill="#b84518"/><rect x="60.38" y="13.00" width="3.02" height="13.10" fill="#a13e16"/><rect x="63.25" y="13.00" width="3.02" height="13.10" fill="#bc4919"/><rect x="66.12" y="13.00" width="3.02" height="13.10" fill="#bd491a"/><rect x="69.00" y="13.00" width="3.02" height="13.10" fill="#de561e"/><rect x="71.88" y="13.00" width="3.02" height="13.10" fill="#8b3511"/><rect x="74.75" y="13.00" width="3.02" height="13.10" fill="#a84015"/><rect x="77.62" y="13.00" width="3.02" height="13.10" fill="#ac4215"/><rect x="80.50" y="13.00" width="3.02" height="13.10" fill="#c04918"/><rect x="83.38" y="13.00" width="3.02" height="13.10" fill="#913713"/><rect x="86.25" y="13.00" width="3.02" height="13.10" fill="#d34f1b"/><rect x="89.12" y="13.00" width="3.02" height="13.10" fill="#c44a19"/><rect x="92.00" y="13.00" width="3.02" height="13.10" fill="#a73f16"/><rect x="94.88" y="13.00" width="3.02" height="13.10" fill="#863310"/><rect x="97.75" y="13.00" width="3.02" height="13.10" fill="#9f3c13"/><rect x="100.62" y="13.00" width="3.02" height="13.10" fill="#bb4717"/><rect x="103.50" y="13.00" width="3.02" height="13.10" fill="#9f3c13"/><rect x="106.38" y="13.00" width="3.02" height="13.10" fill="#9a3a14"/><rect x="109.25" y="13.00" width="3.02" height="13.10" fill="#cf4f1b"/><rect x="112.12" y="13.00" width="3.02" height="13.10" fill="#cd4e1b"/><rect x="115.00" y="13.00" width="3.02" height="13.10" fill="#af4317"/><rect x="117.88" y="13.00" width="3.02" height="13.10" fill="#a13e16"/><rect x="120.75" y="13.00" width="3.02" height="13.10" fill="#e95a20"/><rect x="123.62" y="13.00" width="3.02" height="13.10" fill="#d9541d"/><rect x="126.50" y="13.00" width="3.02" height="13.10" fill="#bf4a1a"/><rect x="129.38" y="13.00" width="3.02" height="13.10" fill="#9a3a14"/><rect x="132.25" y="13.00" width="3.02" height="13.10" fill="#ae4217"/><rect x="135.12" y="13.00" width="3.02" height="13.10" fill="#d2501c"/><rect x="138.00" y="13.00" width="3.02" height="13.10" fill="#b54518"/><rect x="140.88" y="13.00" width="3.02" height="13.10" fill="#933813"/><rect x="143.75" y="13.00" width="3.02" height="13.10" fill="#b14316"/><rect x="146.62" y="13.00" width="3.02" height="13.10" fill="#cc4e1a"/><rect x="149.50" y="13.00" width="3.02" height="13.10" fill="#a43f15"/><rect x="-5.75" y="26.00" width="3.02" height="13.10" fill="#a13e16"/><rect x="-2.88" y="26.00" width="3.02" height="13.10" fill="#e1571e"/><rect x="0.00" y="26.00" width="3.02" height="13.10" fill="#e3581f"/><rect x="2.88" y="26.00" width="3.02" height="13.10" fill="#bd491a"/><rect x="5.75" y="26.00" width="3.02" height="13.10" fill="#8b3511"/><rect x="8.62" y="26.00" width="3.02" height="13.10" fill="#aa4115"/><rect x="11.50" y="26.00" width="3.02" height="13.10" fill="#c24a18"/><rect x="14.38" y="26.00" width="3.02" height="13.10" fill="#9d3c13"/><rect x="17.25" y="26.00" width="3.02" height="13.10" fill="#a13e16"/><rect x="20.12" y="26.00" width="3.02" height="13.10" fill="#d4521d"/><rect x="23.00" y="26.00" width="3.02" height="13.10" fill="#ca4e1b"/><rect x="25.88" y="26.00" width="3.02" height="13.10" fill="#d0501c"/><rect x="28.75" y="26.00" width="3.02" height="13.10" fill="#8b3511"/><rect x="31.62" y="26.00" width="3.02" height="13.10" fill="#b04316"/><rect x="34.50" y="26.00" width="3.02" height="13.10" fill="#b94717"/><rect x="37.38" y="26.00" width="3.02" height="13.10" fill="#a84015"/><rect x="40.25" y="26.00" width="3.02" height="13.10" fill="#722a0d"/><rect x="43.12" y="26.00" width="3.02" height="13.10" fill="#7f2f0f"/><rect x="46.00" y="26.00" width="3.02" height="13.10" fill="#8e3511"/><rect x="48.88" y="26.00" width="3.02" height="13.10" fill="#863110"/><rect x="51.75" y="26.00" width="3.02" height="13.10" fill="#933813"/><rect x="54.62" y="26.00" width="3.02" height="13.10" fill="#d4511b"/><rect x="57.50" y="26.00" width="3.02" height="13.10" fill="#d1501b"/><rect x="60.38" y="26.00" width="3.02" height="13.10" fill="#d7521b"/><rect x="63.25" y="26.00" width="3.02" height="13.10" fill="#722a0d"/><rect x="66.12" y="26.00" width="3.02" height="13.10" fill="#943711"/><rect x="69.00" y="26.00" width="3.02" height="13.10" fill="#a63d13"/><rect x="71.88" y="26.00" width="3.02" height="13.10" fill="#9b3912"/><rect x="74.75" y="26.00" width="3.02" height="13.10" fill="#913713"/><rect x="77.62" y="26.00" width="3.02" height="13.10" fill="#c74b1a"/><rect x="80.50" y="26.00" width="3.02" height="13.10" fill="#cc4d1a"/><rect x="83.38" y="26.00" width="3.02" height="13.10" fill="#c24919"/><rect x="86.25" y="26.00" width="3.02" height="13.10" fill="#863310"/><rect x="89.12" y="26.00" width="3.02" height="13.10" fill="#c24918"/><rect x="92.00" y="26.00" width="3.02" height="13.10" fill="#ae4215"/><rect x="94.88" y="26.00" width="3.02" height="13.10" fill="#bf4817"/><rect x="97.75" y="26.00" width="3.02" height="13.10" fill="#833010"/><rect x="100.62" y="26.00" width="3.02" height="13.10" fill="#b94416"/><rect x="103.50" y="26.00" width="3.02" height="13.10" fill="#be4617"/><rect x="106.38" y="26.00" width="3.02" height="13.10" fill="#963712"/><rect x="109.25" y="26.00" width="3.02" height="13.10" fill="#7b2d0f"/><rect x="112.12" y="26.00" width="3.02" height="13.10" fill="#8a3311"/><rect x="115.00" y="26.00" width="3.02" height="13.10" fill="#b04115"/><rect x="117.88" y="26.00" width="3.02" height="13.10" fill="#a73d14"/><rect x="120.75" y="26.00" width="3.02" height="13.10" fill="#7b2d0f"/><rect x="123.62" y="26.00" width="3.02" height="13.10" fill="#b04015"/><rect x="126.50" y="26.00" width="3.02" height="13.10" fill="#b04015"/><rect x="129.38" y="26.00" width="3.02" height="13.10" fill="#a13b13"/><rect x="132.25" y="26.00" width="3.02" height="13.10" fill="#913713"/><rect x="135.12" y="26.00" width="3.02" height="13.10" fill="#b94618"/><rect x="138.00" y="26.00" width="3.02" height="13.10" fill="#a63f15"/><rect x="140.88" y="26.00" width="3.02" height="13.10" fill="#ba4618"/><rect x="143.75" y="26.00" width="3.02" height="13.10" fill="#7b2d0f"/><rect x="146.62" y="26.00" width="3.02" height="13.10" fill="#a53d14"/><rect x="149.50" y="26.00" width="3.02" height="13.10" fill="#9f3a13"/><rect x="152.38" y="26.00" width="3.02" height="13.10" fill="#9a3913"/><rect x="-11.50" y="39.00" width="3.02" height="13.10" fill="#a13e16"/><rect x="-8.62" y="39.00" width="3.02" height="13.10" fill="#b94819"/><rect x="-5.75" y="39.00" width="3.02" height="13.10" fill="#ea5b20"/><rect x="-2.88" y="39.00" width="3.02" height="13.10" fill="#d1511c"/><rect x="0.00" y="39.00" width="3.02" height="13.10" fill="#913713"/><rect x="2.88" y="39.00" width="3.02" height="13.10" fill="#b24317"/><rect x="5.75" y="39.00" width="3.02" height="13.10" fill="#aa4016"/><rect x="8.62" y="39.00" width="3.02" height="13.10" fill="#bc4718"/><rect x="11.50" y="39.00" width="3.02" height="13.10" fill="#833010"/><rect x="14.38" y="39.00" width="3.02" height="13.10" fill="#993812"/><rect x="17.25" y="39.00" width="3.02" height="13.10" fill="#b64316"/><rect x="20.12" y="39.00" width="3.02" height="13.10" fill="#bc4516"/><rect x="23.00" y="39.00" width="3.02" height="13.10" fill="#9a3a14"/><rect x="25.88" y="39.00" width="3.02" height="13.10" fill="#d7521c"/><rect x="28.75" y="39.00" width="3.02" height="13.10" fill="#aa4116"/><rect x="31.62" y="39.00" width="3.02" height="13.10" fill="#cc4e1b"/><rect x="34.50" y="39.00" width="3.02" height="13.10" fill="#722a0d"/><rect x="37.38" y="39.00" width="3.02" height="13.10" fill="#802f0f"/><rect x="40.25" y="39.00" width="3.02" height="13.10" fill="#893310"/><rect x="43.12" y="39.00" width="3.02" height="13.10" fill="#893310"/><rect x="46.00" y="39.00" width="3.02" height="13.10" fill="#863310"/><rect x="48.88" y="39.00" width="3.02" height="13.10" fill="#ad4115"/><rect x="51.75" y="39.00" width="3.02" height="13.10" fill="#963912"/><rect x="54.62" y="39.00" width="3.02" height="13.10" fill="#a33e14"/><rect x="57.50" y="39.00" width="3.02" height="13.10" fill="#913713"/><rect x="60.38" y="39.00" width="3.02" height="13.10" fill="#cd4d1a"/><rect x="63.25" y="39.00" width="3.02" height="13.10" fill="#c84b1a"/><rect x="66.12" y="39.00" width="3.02" height="13.10" fill="#a23d15"/><rect x="69.00" y="39.00" width="3.02" height="13.10" fill="#913713"/><rect x="71.88" y="39.00" width="3.02" height="13.10" fill="#a43e15"/><rect x="74.75" y="39.00" width="3.02" height="13.10" fill="#d34f1b"/><rect x="77.62" y="39.00" width="3.02" height="13.10" fill="#cc4d1a"/><rect x="80.50" y="39.00" width="3.02" height="13.10" fill="#833010"/><rect x="83.38" y="39.00" width="3.02" height="13.10" fill="#a93e14"/><rect x="86.25" y="39.00" width="3.02" height="13.10" fill="#a83e14"/><rect x="89.12" y="39.00" width="3.02" height="13.10" fill="#983812"/><rect x="92.00" y="39.00" width="3.02" height="13.10" fill="#833010"/><rect x="94.88" y="39.00" width="3.02" height="13.10" fill="#a13b13"/><rect x="97.75" y="39.00" width="3.02" height="13.10" fill="#af4115"/><rect x="100.62" y="39.00" width="3.02" height="13.10" fill="#ac4014"/><rect x="103.50" y="39.00" width="3.02" height="13.10" fill="#a13e16"/><rect x="106.38" y="39.00" width="3.02" height="13.10" fill="#c14b1a"/><rect x="109.25" y="39.00" width="3.02" height="13.10" fill="#eb5b20"/><rect x="112.12" y="39.00" width="3.02" height="13.10" fill="#cb4e1b"/><rect x="115.00" y="39.00" width="3.02" height="13.10" fill="#9a3a14"/><rect x="117.88" y="39.00" width="3.02" height="13.10" fill="#c84c1a"/><rect x="120.75" y="39.00" width="3.02" height="13.10" fill="#d1501c"/><rect x="123.62" y="39.00" width="3.02" height="13.10" fill="#be4819"/><rect x="126.50" y="39.00" width="3.02" height="13.10" fill="#833010"/><rect x="129.38" y="39.00" width="3.02" height="13.10" fill="#ab3f14"/><rect x="132.25" y="39.00" width="3.02" height="13.10" fill="#933611"/><rect x="135.12" y="39.00" width="3.02" height="13.10" fill="#a63d14"/><rect x="138.00" y="39.00" width="3.02" height="13.10" fill="#863310"/><rect x="140.88" y="39.00" width="3.02" height="13.10" fill="#a63f14"/><rect x="143.75" y="39.00" width="3.02" height="13.10" fill="#bb4617"/><rect x="146.62" y="39.00" width="3.02" height="13.10" fill="#b24316"/><rect x="-2.88" y="52.00" width="3.02" height="13.10" fill="#913713"/><rect x="0.00" y="52.00" width="3.02" height="13.10" fill="#b34317"/><rect x="2.88" y="52.00" width="3.02" height="13.10" fill="#ba4618"/><rect x="5.75" y="52.00" width="3.02" height="13.10" fill="#c54a19"/><rect x="8.62" y="52.00" width="3.02" height="13.10" fill="#722a0d"/><rect x="11.50" y="52.00" width="3.02" height="13.10" fill="#a43d13"/><rect x="14.38" y="52.00" width="3.02" height="13.10" fill="#8f3511"/><rect x="17.25" y="52.00" width="3.02" height="13.10" fill="#7e2f0f"/><rect x="20.12" y="52.00" width="3.02" height="13.10" fill="#7b2d0f"/><rect x="23.00" y="52.00" width="3.02" height="13.10" fill="#a03b13"/><rect x="25.88" y="52.00" width="3.02" height="13.10" fill="#a73d14"/><rect x="28.75" y="52.00" width="3.02" height="13.10" fill="#8b3311"/><rect x="31.62" y="52.00" width="3.02" height="13.10" fill="#722a0d"/><rect x="34.50" y="52.00" width="3.02" height="13.10" fill="#873210"/><rect x="37.38" y="52.00" width="3.02" height="13.10" fill="#83300f"/><rect x="40.25" y="52.00" width="3.02" height="13.10" fill="#7f2f0f"/><rect x="43.12" y="52.00" width="3.02" height="13.10" fill="#a13e16"/><rect x="46.00" y="52.00" width="3.02" height="13.10" fill="#c84d1b"/><rect x="48.88" y="52.00" width="3.02" height="13.10" fill="#e6591f"/><rect x="51.75" y="52.00" width="3.02" height="13.10" fill="#e0571e"/><rect x="54.62" y="52.00" width="3.02" height="13.10" fill="#8b3511"/><rect x="57.50" y="52.00" width="3.02" height="13.10" fill="#9f3d14"/><rect x="60.38" y="52.00" width="3.02" height="13.10" fill="#bb4817"/><rect x="63.25" y="52.00" width="3.02" height="13.10" fill="#c84c19"/><rect x="66.12" y="52.00" width="3.02" height="13.10" fill="#863310"/><rect x="69.00" y="52.00" width="3.02" height="13.10" fill="#ba4617"/><rect x="71.88" y="52.00" width="3.02" height="13.10" fill="#b44416"/><rect x="74.75" y="52.00" width="3.02" height="13.10" fill="#b74516"/><rect x="77.62" y="52.00" width="3.02" height="13.10" fill="#863310"/><rect x="80.50" y="52.00" width="3.02" height="13.10" fill="#993a13"/><rect x="83.38" y="52.00" width="3.02" height="13.10" fill="#b04316"/><rect x="86.25" y="52.00" width="3.02" height="13.10" fill="#943812"/><rect x="89.12" y="52.00" width="3.02" height="13.10" fill="#9a3a14"/><rect x="92.00" y="52.00" width="3.02" height="13.10" fill="#b64518"/><rect x="94.88" y="52.00" width="3.02" height="13.10" fill="#bf4919"/><rect x="97.75" y="52.00" width="3.02" height="13.10" fill="#c74c1a"/><rect x="100.62" y="52.00" width="3.02" height="13.10" fill="#833010"/><rect x="103.50" y="52.00" width="3.02" height="13.10" fill="#af4115"/><rect x="106.38" y="52.00" width="3.02" height="13.10" fill="#a23c13"/><rect x="109.25" y="52.00" width="3.02" height="13.10" fill="#b74416"/><rect x="112.12" y="52.00" width="3.02" height="13.10" fill="#a13e16"/><rect x="115.00" y="52.00" width="3.02" height="13.10" fill="#e3581f"/><rect x="117.88" y="52.00" width="3.02" height="13.10" fill="#b94819"/><rect x="120.75" y="52.00" width="3.02" height="13.10" fill="#e3581f"/><rect x="123.62" y="52.00" width="3.02" height="13.10" fill="#933813"/><rect x="126.50" y="52.00" width="3.02" height="13.10" fill="#cf4f1a"/><rect x="129.38" y="52.00" width="3.02" height="13.10" fill="#d5511b"/><rect x="132.25" y="52.00" width="3.02" height="13.10" fill="#c14a19"/><rect x="135.12" y="52.00" width="3.02" height="13.10" fill="#833010"/><rect x="138.00" y="52.00" width="3.02" height="13.10" fill="#923611"/><rect x="140.88" y="52.00" width="3.02" height="13.10" fill="#b54315"/><rect x="143.75" y="52.00" width="3.02" height="13.10" fill="#a93e14"/><rect x="146.62" y="52.00" width="3.02" height="13.10" fill="#7b2d0f"/><rect x="149.50" y="52.00" width="3.02" height="13.10" fill="#8d3411"/><rect x="152.38" y="52.00" width="3.02" height="13.10" fill="#a93e14"/><rect x="155.25" y="52.00" width="3.02" height="13.10" fill="#b14115"/><rect x="-11.50" y="65.00" width="3.02" height="13.10" fill="#863310"/><rect x="-8.62" y="65.00" width="3.02" height="13.10" fill="#a43e14"/><rect x="-5.75" y="65.00" width="3.02" height="13.10" fill="#af4215"/><rect x="-2.88" y="65.00" width="3.02" height="13.10" fill="#bc4717"/><rect x="0.00" y="65.00" width="3.02" height="13.10" fill="#7b2d0f"/><rect x="2.88" y="65.00" width="3.02" height="13.10" fill="#b44216"/><rect x="5.75" y="65.00" width="3.02" height="13.10" fill="#a43c14"/><rect x="8.62" y="65.00" width="3.02" height="13.10" fill="#9c3913"/><rect x="11.50" y="65.00" width="3.02" height="13.10" fill="#722a0d"/><rect x="14.38" y="65.00" width="3.02" height="13.10" fill="#883210"/><rect x="17.25" y="65.00" width="3.02" height="13.10" fill="#963811"/><rect x="20.12" y="65.00" width="3.02" height="13.10" fill="#a43d13"/><rect x="23.00" y="65.00" width="3.02" height="13.10" fill="#863310"/><rect x="25.88" y="65.00" width="3.02" height="13.10" fill="#a84015"/><rect x="28.75" y="65.00" width="3.02" height="13.10" fill="#983913"/><rect x="31.62" y="65.00" width="3.02" height="13.10" fill="#ac4115"/><rect x="34.50" y="65.00" width="3.02" height="13.10" fill="#722a0d"/><rect x="37.38" y="65.00" width="3.02" height="13.10" fill="#a03b13"/><rect x="40.25" y="65.00" width="3.02" height="13.10" fill="#a53d13"/><rect x="43.12" y="65.00" width="3.02" height="13.10" fill="#8f3511"/><rect x="46.00" y="65.00" width="3.02" height="13.10" fill="#863310"/><rect x="48.88" y="65.00" width="3.02" height="13.10" fill="#b54416"/><rect x="51.75" y="65.00" width="3.02" height="13.10" fill="#9b3b13"/><rect x="54.62" y="65.00" width="3.02" height="13.10" fill="#a73f14"/><rect x="57.50" y="65.00" width="3.02" height="13.10" fill="#9a3a14"/><rect x="60.38" y="65.00" width="3.02" height="13.10" fill="#b24418"/><rect x="63.25" y="65.00" width="3.02" height="13.10" fill="#c54b1a"/><rect x="66.12" y="65.00" width="3.02" height="13.10" fill="#c44b1a"/><rect x="69.00" y="65.00" width="3.02" height="13.10" fill="#863310"/><rect x="71.88" y="65.00" width="3.02" height="13.10" fill="#c24918"/><rect x="74.75" y="65.00" width="3.02" height="13.10" fill="#b04316"/><rect x="77.62" y="65.00" width="3.02" height="13.10" fill="#bd4817"/><rect x="80.50" y="65.00" width="3.02" height="13.10" fill="#9a3a14"/><rect x="83.38" y="65.00" width="3.02" height="13.10" fill="#b84618"/><rect x="86.25" y="65.00" width="3.02" height="13.10" fill="#b44518"/><rect x="89.12" y="65.00" width="3.02" height="13.10" fill="#ca4d1b"/><rect x="92.00" y="65.00" width="3.02" height="13.10" fill="#a13e16"/><rect x="94.88" y="65.00" width="3.02" height="13.10" fill="#e85a1f"/><rect x="97.75" y="65.00" width="3.02" height="13.10" fill="#e3581f"/><rect x="100.62" y="65.00" width="3.02" height="13.10" fill="#d1511c"/><rect x="103.50" y="65.00" width="3.02" height="13.10" fill="#8b3511"/><rect x="106.38" y="65.00" width="3.02" height="13.10" fill="#bb4717"/><rect x="109.25" y="65.00" width="3.02" height="13.10" fill="#c44b18"/><rect x="112.12" y="65.00" width="3.02" height="13.10" fill="#b74617"/><rect x="115.00" y="65.00" width="3.02" height="13.10" fill="#8b3511"/><rect x="117.88" y="65.00" width="3.02" height="13.10" fill="#c54b18"/><rect x="120.75" y="65.00" width="3.02" height="13.10" fill="#a84015"/><rect x="123.62" y="65.00" width="3.02" height="13.10" fill="#a64015"/><rect x="126.50" y="65.00" width="3.02" height="13.10" fill="#722a0d"/><rect x="129.38" y="65.00" width="3.02" height="13.10" fill="#863110"/><rect x="132.25" y="65.00" width="3.02" height="13.10" fill="#953711"/><rect x="135.12" y="65.00" width="3.02" height="13.10" fill="#873210"/><rect x="138.00" y="65.00" width="3.02" height="13.10" fill="#933813"/><rect x="140.88" y="65.00" width="3.02" height="13.10" fill="#cc4e1a"/><rect x="143.75" y="65.00" width="3.02" height="13.10" fill="#aa4116"/><rect x="146.62" y="65.00" width="3.02" height="13.10" fill="#d7521b"/><rect x="-2.88" y="78.00" width="3.02" height="13.10" fill="#7b2d0f"/><rect x="0.00" y="78.00" width="3.02" height="13.10" fill="#9d3913"/><rect x="2.88" y="78.00" width="3.02" height="13.10" fill="#ad3f15"/><rect x="5.75" y="78.00" width="3.02" height="13.10" fill="#ac3f15"/><rect x="8.62" y="78.00" width="3.02" height="13.10" fill="#863310"/><rect x="11.50" y="78.00" width="3.02" height="13.10" fill="#953812"/><rect x="14.38" y="78.00" width="3.02" height="13.10" fill="#c44a18"/><rect x="17.25" y="78.00" width="3.02" height="13.10" fill="#973912"/><rect x="20.12" y="78.00" width="3.02" height="13.10" fill="#722a0d"/><rect x="23.00" y="78.00" width="3.02" height="13.10" fill="#9e3a12"/><rect x="25.88" y="78.00" width="3.02" height="13.10" fill="#a23c13"/><rect x="28.75" y="78.00" width="3.02" height="13.10" fill="#7f2f0f"/><rect x="31.62" y="78.00" width="3.02" height="13.10" fill="#7b2d0f"/><rect x="34.50" y="78.00" width="3.02" height="13.10" fill="#af4015"/><rect x="37.38" y="78.00" width="3.02" height="13.10" fill="#a53c14"/><rect x="40.25" y="78.00" width="3.02" height="13.10" fill="#aa3f14"/><rect x="43.12" y="78.00" width="3.02" height="13.10" fill="#833010"/><rect x="46.00" y="78.00" width="3.02" height="13.10" fill="#be4617"/><rect x="48.88" y="78.00" width="3.02" height="13.10" fill="#b94416"/><rect x="51.75" y="78.00" width="3.02" height="13.10" fill="#9c3a13"/><rect x="54.62" y="78.00" width="3.02" height="13.10" fill="#7b2d0f"/><rect x="57.50" y="78.00" width="3.02" height="13.10" fill="#aa3e14"/><rect x="60.38" y="78.00" width="3.02" height="13.10" fill="#8e3411"/><rect x="63.25" y="78.00" width="3.02" height="13.10" fill="#a33c14"/><rect x="66.12" y="78.00" width="3.02" height="13.10" fill="#913713"/><rect x="69.00" y="78.00" width="3.02" height="13.10" fill="#cf4e1b"/><rect x="71.88" y="78.00" width="3.02" height="13.10" fill="#ad4116"/><rect x="74.75" y="78.00" width="3.02" height="13.10" fill="#cd4d1a"/><rect x="77.62" y="78.00" width="3.02" height="13.10" fill="#a13e16"/><rect x="80.50" y="78.00" width="3.02" height="13.10" fill="#bd491a"/><rect x="83.38" y="78.00" width="3.02" height="13.10" fill="#b74719"/><rect x="86.25" y="78.00" width="3.02" height="13.10" fill="#e0571e"/><rect x="89.12" y="78.00" width="3.02" height="13.10" fill="#833010"/><rect x="92.00" y="78.00" width="3.02" height="13.10" fill="#953712"/><rect x="94.88" y="78.00" width="3.02" height="13.10" fill="#b84416"/><rect x="97.75" y="78.00" width="3.02" height="13.10" fill="#9e3a13"/><rect x="100.62" y="78.00" width="3.02" height="13.10" fill="#a13e16"/><rect x="103.50" y="78.00" width="3.02" height="13.10" fill="#cc4f1c"/><rect x="106.38" y="78.00" width="3.02" height="13.10" fill="#dd551e"/><rect x="109.25" y="78.00" width="3.02" height="13.10" fill="#c64c1b"/><rect x="112.12" y="78.00" width="3.02" height="13.10" fill="#913713"/><rect x="115.00" y="78.00" width="3.02" height="13.10" fill="#b14317"/><rect x="117.88" y="78.00" width="3.02" height="13.10" fill="#b74518"/><rect x="120.75" y="78.00" width="3.02" height="13.10" fill="#b94618"/><rect x="123.62" y="78.00" width="3.02" height="13.10" fill="#7b2d0f"/><rect x="126.50" y="78.00" width="3.02" height="13.10" fill="#a43c14"/><rect x="129.38" y="78.00" width="3.02" height="13.10" fill="#a93e14"/><rect x="132.25" y="78.00" width="3.02" height="13.10" fill="#9e3a13"/><rect x="135.12" y="78.00" width="3.02" height="13.10" fill="#9a3a14"/><rect x="138.00" y="78.00" width="3.02" height="13.10" fill="#c74c1a"/><rect x="140.88" y="78.00" width="3.02" height="13.10" fill="#b04317"/><rect x="143.75" y="78.00" width="3.02" height="13.10" fill="#b94618"/><rect x="146.62" y="78.00" width="3.02" height="13.10" fill="#722a0d"/><rect x="149.50" y="78.00" width="3.02" height="13.10" fill="#82300f"/><rect x="152.38" y="78.00" width="3.02" height="13.10" fill="#a23c13"/><rect x="155.25" y="78.00" width="3.02" height="13.10" fill="#a33c13"/><rect x="-11.50" y="91.00" width="3.02" height="13.10" fill="#863310"/><rect x="-8.62" y="91.00" width="3.02" height="13.10" fill="#c14918"/><rect x="-5.75" y="91.00" width="3.02" height="13.10" fill="#a63f14"/><rect x="-2.88" y="91.00" width="3.02" height="13.10" fill="#b94617"/><rect x="0.00" y="91.00" width="3.02" height="13.10" fill="#933813"/><rect x="2.88" y="91.00" width="3.02" height="13.10" fill="#b24417"/><rect x="5.75" y="91.00" width="3.02" height="13.10" fill="#c64c19"/><rect x="8.62" y="91.00" width="3.02" height="13.10" fill="#c54b19"/><rect x="11.50" y="91.00" width="3.02" height="13.10" fill="#8b3511"/><rect x="14.38" y="91.00" width="3.02" height="13.10" fill="#9e3d14"/><rect x="17.25" y="91.00" width="3.02" height="13.10" fill="#c84c19"/><rect x="20.12" y="91.00" width="3.02" height="13.10" fill="#aa4115"/><rect x="23.00" y="91.00" width="3.02" height="13.10" fill="#863310"/><rect x="25.88" y="91.00" width="3.02" height="13.10" fill="#ad4115"/><rect x="28.75" y="91.00" width="3.02" height="13.10" fill="#b44416"/><rect x="31.62" y="91.00" width="3.02" height="13.10" fill="#ac4115"/><rect x="34.50" y="91.00" width="3.02" height="13.10" fill="#913713"/><rect x="37.38" y="91.00" width="3.02" height="13.10" fill="#c54a19"/><rect x="40.25" y="91.00" width="3.02" height="13.10" fill="#c34919"/><rect x="43.12" y="91.00" width="3.02" height="13.10" fill="#bd4718"/><rect x="46.00" y="91.00" width="3.02" height="13.10" fill="#9a3a14"/><rect x="48.88" y="91.00" width="3.02" height="13.10" fill="#cd4e1b"/><rect x="51.75" y="91.00" width="3.02" height="13.10" fill="#d2501c"/><rect x="54.62" y="91.00" width="3.02" height="13.10" fill="#b24417"/><rect x="57.50" y="91.00" width="3.02" height="13.10" fill="#a13e16"/><rect x="60.38" y="91.00" width="3.02" height="13.10" fill="#e6591f"/><rect x="63.25" y="91.00" width="3.02" height="13.10" fill="#d8531d"/><rect x="66.12" y="91.00" width="3.02" height="13.10" fill="#b94819"/><rect x="69.00" y="91.00" width="3.02" height="13.10" fill="#863310"/><rect x="71.88" y="91.00" width="3.02" height="13.10" fill="#9b3a13"/><rect x="74.75" y="91.00" width="3.02" height="13.10" fill="#a43e14"/><rect x="77.62" y="91.00" width="3.02" height="13.10" fill="#b74516"/><rect x="80.50" y="91.00" width="3.02" height="13.10" fill="#722a0d"/><rect x="83.38" y="91.00" width="3.02" height="13.10" fill="#943711"/><rect x="86.25" y="91.00" width="3.02" height="13.10" fill="#983812"/><rect x="89.12" y="91.00" width="3.02" height="13.10" fill="#903511"/><rect x="92.00" y="91.00" width="3.02" height="13.10" fill="#8b3511"/><rect x="94.88" y="91.00" width="3.02" height="13.10" fill="#c04918"/><rect x="97.75" y="91.00" width="3.02" height="13.10" fill="#bc4817"/><rect x="100.62" y="91.00" width="3.02" height="13.10" fill="#9e3d14"/><rect x="103.50" y="91.00" width="3.02" height="13.10" fill="#9a3a14"/><rect x="106.38" y="91.00" width="3.02" height="13.10" fill="#d3501c"/><rect x="109.25" y="91.00" width="3.02" height="13.10" fill="#c74c1a"/><rect x="112.12" y="91.00" width="3.02" height="13.10" fill="#d2501c"/><rect x="115.00" y="91.00" width="3.02" height="13.10" fill="#a13e16"/><rect x="117.88" y="91.00" width="3.02" height="13.10" fill="#b84719"/><rect x="120.75" y="91.00" width="3.02" height="13.10" fill="#c24b1a"/><rect x="123.62" y="91.00" width="3.02" height="13.10" fill="#b54618"/><rect x="126.50" y="91.00" width="3.02" height="13.10" fill="#9a3a14"/><rect x="129.38" y="91.00" width="3.02" height="13.10" fill="#ac4117"/><rect x="132.25" y="91.00" width="3.02" height="13.10" fill="#c54b1a"/><rect x="135.12" y="91.00" width="3.02" height="13.10" fill="#b74618"/><rect x="138.00" y="91.00" width="3.02" height="13.10" fill="#863310"/><rect x="140.88" y="91.00" width="3.02" height="13.10" fill="#a53e14"/><rect x="143.75" y="91.00" width="3.02" height="13.10" fill="#a43e14"/><rect x="146.62" y="91.00" width="3.02" height="13.10" fill="#a73f14"/></pattern><pattern id="rlb" width="11.5" height="13" patternUnits="userSpaceOnUse"><rect y="11.2" width="11.5" height="1.8" fill="#4a1804" fill-opacity="0.5"/><rect y="0" width="11.5" height="2.4" fill="#ff8a40" fill-opacity=".07"/></pattern></defs><polygon points="-30.00,314.00 570.00,314.00 282.76,-0.01 282.76,-30.00 -30.00,-30.00" fill="url(#rlp)"/><polygon points="-30.00,314.00 570.00,314.00 282.76,-0.01 282.76,-30.00 -30.00,-30.00" fill="url(#rlb)"/><linearGradient id="rlz" gradientUnits="userSpaceOnUse" x1="0" x2="570" y1="0" y2="0"><stop offset="0" stop-color="#3a0c00" stop-opacity=".12"/><stop offset=".55" stop-color="#3a0c00" stop-opacity=".05"/><stop offset="1" stop-color="#3a0c00" stop-opacity=".02"/></linearGradient><polygon points="-30.00,314.00 570.00,314.00 282.76,-0.01 282.76,-30.00 -30.00,-30.00" fill="url(#rlz)"/></svg><svg class="abs" style="left:0;top:0;transform-origin:0 0;transform:matrix3d(1.23415943,0.336022137,0,0.000698470029,0.699925989,0.392236346,0,-0.000458384621,0,0,1,0,282.84537,321.754676,0,0.990396584)" width="1080" height="354" viewBox="-40 -40 1080 354"><defs><pattern id="rrp" width="138" height="104" patternUnits="userSpaceOnUse"><rect width="138" height="104" fill="#bf4511"/><rect x="-11.50" y="0.00" width="2.45" height="13.10" fill="#7d2b0b"/><rect x="-9.20" y="0.00" width="2.45" height="13.10" fill="#a93a0f"/><rect x="-6.90" y="0.00" width="2.45" height="13.10" fill="#8a300d"/><rect x="-4.60" y="0.00" width="2.45" height="13.10" fill="#a3380f"/><rect x="-2.30" y="0.00" width="2.45" height="13.10" fill="#a73a0f"/><rect x="0.00" y="0.00" width="2.45" height="13.10" fill="#ab3d0f"/><rect x="2.30" y="0.00" width="2.45" height="13.10" fill="#c34611"/><rect x="4.60" y="0.00" width="2.45" height="13.10" fill="#cf4a12"/><rect x="6.90" y="0.00" width="2.45" height="13.10" fill="#b24010"/><rect x="9.20" y="0.00" width="2.45" height="13.10" fill="#be4411"/><rect x="11.50" y="0.00" width="2.45" height="13.10" fill="#a73c0f"/><rect x="13.80" y="0.00" width="2.45" height="13.10" fill="#c34611"/><rect x="16.10" y="0.00" width="2.45" height="13.10" fill="#d84e13"/><rect x="18.40" y="0.00" width="2.45" height="13.10" fill="#d54d13"/><rect x="20.70" y="0.00" width="2.45" height="13.10" fill="#b44110"/><rect x="23.00" y="0.00" width="2.45" height="13.10" fill="#b04011"/><rect x="25.30" y="0.00" width="2.45" height="13.10" fill="#ed5616"/><rect x="27.60" y="0.00" width="2.45" height="13.10" fill="#c14612"/><rect x="29.90" y="0.00" width="2.45" height="13.10" fill="#d84e14"/><rect x="32.20" y="0.00" width="2.45" height="13.10" fill="#bd4412"/><rect x="34.50" y="0.00" width="2.45" height="13.10" fill="#bc4412"/><rect x="36.80" y="0.00" width="2.45" height="13.10" fill="#c04512"/><rect x="39.10" y="0.00" width="2.45" height="13.10" fill="#f35817"/><rect x="41.40" y="0.00" width="2.45" height="13.10" fill="#c74813"/><rect x="43.70" y="0.00" width="2.45" height="13.10" fill="#ca4913"/><rect x="46.00" y="0.00" width="2.45" height="13.10" fill="#a23a0e"/><rect x="48.30" y="0.00" width="2.45" height="13.10" fill="#e25214"/><rect x="50.60" y="0.00" width="2.45" height="13.10" fill="#e25214"/><rect x="52.90" y="0.00" width="2.45" height="13.10" fill="#b54110"/><rect x="55.20" y="0.00" width="2.45" height="13.10" fill="#e35214"/><rect x="57.50" y="0.00" width="2.45" height="13.10" fill="#c44813"/><rect x="59.80" y="0.00" width="2.45" height="13.10" fill="#e55417"/><rect x="62.10" y="0.00" width="2.45" height="13.10" fill="#ec5717"/><rect x="64.40" y="0.00" width="2.45" height="13.10" fill="#ca4b14"/><rect x="66.70" y="0.00" width="2.45" height="13.10" fill="#ff611a"/><rect x="69.00" y="0.00" width="2.45" height="13.10" fill="#96360d"/><rect x="71.30" y="0.00" width="2.45" height="13.10" fill="#b54110"/><rect x="73.60" y="0.00" width="2.45" height="13.10" fill="#bf4511"/><rect x="75.90" y="0.00" width="2.45" height="13.10" fill="#c84812"/><rect x="78.20" y="0.00" width="2.45" height="13.10" fill="#a73c0f"/><rect x="80.50" y="0.00" width="2.45" height="13.10" fill="#aa3e10"/><rect x="82.80" y="0.00" width="2.45" height="13.10" fill="#c64813"/><rect x="85.10" y="0.00" width="2.45" height="13.10" fill="#b24011"/><rect x="87.40" y="0.00" width="2.45" height="13.10" fill="#b54211"/><rect x="89.70" y="0.00" width="2.45" height="13.10" fill="#ad3f10"/><rect x="92.00" y="0.00" width="2.45" height="13.10" fill="#9f380e"/><rect x="94.30" y="0.00" width="2.45" height="13.10" fill="#b64010"/><rect x="96.60" y="0.00" width="2.45" height="13.10" fill="#cd4912"/><rect x="98.90" y="0.00" width="2.45" height="13.10" fill="#ac3d0f"/><rect x="101.20" y="0.00" width="2.45" height="13.10" fill="#d14a13"/><rect x="103.50" y="0.00" width="2.45" height="13.10" fill="#b13f10"/><rect x="105.80" y="0.00" width="2.45" height="13.10" fill="#c64712"/><rect x="108.10" y="0.00" width="2.45" height="13.10" fill="#be4411"/><rect x="110.40" y="0.00" width="2.45" height="13.10" fill="#d84e14"/><rect x="112.70" y="0.00" width="2.45" height="13.10" fill="#ca4812"/><rect x="115.00" y="0.00" width="2.45" height="13.10" fill="#b04011"/><rect x="117.30" y="0.00" width="2.45" height="13.10" fill="#d44c14"/><rect x="119.60" y="0.00" width="2.45" height="13.10" fill="#d84e14"/><rect x="121.90" y="0.00" width="2.45" height="13.10" fill="#de5015"/><rect x="124.20" y="0.00" width="2.45" height="13.10" fill="#c64813"/><rect x="126.50" y="0.00" width="2.45" height="13.10" fill="#a13b10"/><rect x="128.80" y="0.00" width="2.45" height="13.10" fill="#dc5116"/><rect x="131.10" y="0.00" width="2.45" height="13.10" fill="#ac4011"/><rect x="133.40" y="0.00" width="2.45" height="13.10" fill="#d24e15"/><rect x="135.70" y="0.00" width="2.45" height="13.10" fill="#d64f15"/><rect x="138.00" y="0.00" width="2.45" height="13.10" fill="#9b360e"/><rect x="140.30" y="0.00" width="2.45" height="13.10" fill="#ba4211"/><rect x="142.60" y="0.00" width="2.45" height="13.10" fill="#ba4211"/><rect x="144.90" y="0.00" width="2.45" height="13.10" fill="#9f380e"/><rect x="147.20" y="0.00" width="2.45" height="13.10" fill="#aa3c0f"/><rect x="-11.50" y="13.00" width="2.45" height="13.10" fill="#a63d10"/><rect x="-9.20" y="13.00" width="2.45" height="13.10" fill="#e05316"/><rect x="-6.90" y="13.00" width="2.45" height="13.10" fill="#b14112"/><rect x="-4.60" y="13.00" width="2.45" height="13.10" fill="#cd4c14"/><rect x="-2.30" y="13.00" width="2.45" height="13.10" fill="#de5216"/><rect x="0.00" y="13.00" width="2.45" height="13.10" fill="#ae3e0f"/><rect x="2.30" y="13.00" width="2.45" height="13.10" fill="#c74711"/><rect x="4.60" y="13.00" width="2.45" height="13.10" fill="#c64711"/><rect x="6.90" y="13.00" width="2.45" height="13.10" fill="#b34010"/><rect x="9.20" y="13.00" width="2.45" height="13.10" fill="#b84210"/><rect x="11.50" y="13.00" width="2.45" height="13.10" fill="#a93d0f"/><rect x="13.80" y="13.00" width="2.45" height="13.10" fill="#bc4410"/><rect x="16.10" y="13.00" width="2.45" height="13.10" fill="#de5013"/><rect x="18.40" y="13.00" width="2.45" height="13.10" fill="#da4e13"/><rect x="20.70" y="13.00" width="2.45" height="13.10" fill="#bc4410"/><rect x="23.00" y="13.00" width="2.45" height="13.10" fill="#b84412"/><rect x="25.30" y="13.00" width="2.45" height="13.10" fill="#f25a18"/><rect x="27.60" y="13.00" width="2.45" height="13.10" fill="#cd4c14"/><rect x="29.90" y="13.00" width="2.45" height="13.10" fill="#eb5717"/><rect x="32.20" y="13.00" width="2.45" height="13.10" fill="#c64914"/><rect x="34.50" y="13.00" width="2.45" height="13.10" fill="#bd4412"/><rect x="36.80" y="13.00" width="2.45" height="13.10" fill="#c14612"/><rect x="39.10" y="13.00" width="2.45" height="13.10" fill="#f85a17"/><rect x="41.40" y="13.00" width="2.45" height="13.10" fill="#d14c14"/><rect x="43.70" y="13.00" width="2.45" height="13.10" fill="#ca4913"/><rect x="46.00" y="13.00" width="2.45" height="13.10" fill="#ad3e10"/><rect x="48.30" y="13.00" width="2.45" height="13.10" fill="#eb5516"/><rect x="50.60" y="13.00" width="2.45" height="13.10" fill="#ee5616"/><rect x="52.90" y="13.00" width="2.45" height="13.10" fill="#c44712"/><rect x="55.20" y="13.00" width="2.45" height="13.10" fill="#e45215"/><rect x="57.50" y="13.00" width="2.45" height="13.10" fill="#9d370e"/><rect x="59.80" y="13.00" width="2.45" height="13.10" fill="#c64612"/><rect x="62.10" y="13.00" width="2.45" height="13.10" fill="#ca4712"/><rect x="64.40" y="13.00" width="2.45" height="13.10" fill="#b33f10"/><rect x="66.70" y="13.00" width="2.45" height="13.10" fill="#d44b13"/><rect x="69.00" y="13.00" width="2.45" height="13.10" fill="#99370d"/><rect x="71.30" y="13.00" width="2.45" height="13.10" fill="#b44110"/><rect x="73.60" y="13.00" width="2.45" height="13.10" fill="#c34611"/><rect x="75.90" y="13.00" width="2.45" height="13.10" fill="#c44611"/><rect x="78.20" y="13.00" width="2.45" height="13.10" fill="#ab3d0f"/><rect x="80.50" y="13.00" width="2.45" height="13.10" fill="#8d310d"/><rect x="82.80" y="13.00" width="2.45" height="13.10" fill="#9a350e"/><rect x="85.10" y="13.00" width="2.45" height="13.10" fill="#98350e"/><rect x="87.40" y="13.00" width="2.45" height="13.10" fill="#9b350e"/><rect x="89.70" y="13.00" width="2.45" height="13.10" fill="#97340e"/><rect x="92.00" y="13.00" width="2.45" height="13.10" fill="#b14011"/><rect x="94.30" y="13.00" width="2.45" height="13.10" fill="#c94913"/><rect x="96.60" y="13.00" width="2.45" height="13.10" fill="#dd5015"/><rect x="98.90" y="13.00" width="2.45" height="13.10" fill="#b94311"/><rect x="101.20" y="13.00" width="2.45" height="13.10" fill="#df5015"/><rect x="103.50" y="13.00" width="2.45" height="13.10" fill="#a43b0f"/><rect x="105.80" y="13.00" width="2.45" height="13.10" fill="#ba4311"/><rect x="108.10" y="13.00" width="2.45" height="13.10" fill="#bd4411"/><rect x="110.40" y="13.00" width="2.45" height="13.10" fill="#cd4a12"/><rect x="112.70" y="13.00" width="2.45" height="13.10" fill="#bf4511"/><rect x="115.00" y="13.00" width="2.45" height="13.10" fill="#b64312"/><rect x="117.30" y="13.00" width="2.45" height="13.10" fill="#d64f15"/><rect x="119.60" y="13.00" width="2.45" height="13.10" fill="#dd5216"/><rect x="121.90" y="13.00" width="2.45" height="13.10" fill="#ed5718"/><rect x="124.20" y="13.00" width="2.45" height="13.10" fill="#c24813"/><rect x="126.50" y="13.00" width="2.45" height="13.10" fill="#ab3f11"/><rect x="128.80" y="13.00" width="2.45" height="13.10" fill="#dd5216"/><rect x="131.10" y="13.00" width="2.45" height="13.10" fill="#a93f11"/><rect x="133.40" y="13.00" width="2.45" height="13.10" fill="#ce4c14"/><rect x="135.70" y="13.00" width="2.45" height="13.10" fill="#d64f15"/><rect x="138.00" y="13.00" width="2.45" height="13.10" fill="#ae3e0f"/><rect x="140.30" y="13.00" width="2.45" height="13.10" fill="#cf4a12"/><rect x="142.60" y="13.00" width="2.45" height="13.10" fill="#ca4812"/><rect x="144.90" y="13.00" width="2.45" height="13.10" fill="#b24010"/><rect x="147.20" y="13.00" width="2.45" height="13.10" fill="#bb4310"/><rect x="-11.50" y="26.00" width="2.45" height="13.10" fill="#a43d10"/><rect x="-9.20" y="26.00" width="2.45" height="13.10" fill="#d74f15"/><rect x="-6.90" y="26.00" width="2.45" height="13.10" fill="#aa3f11"/><rect x="-4.60" y="26.00" width="2.45" height="13.10" fill="#d14d15"/><rect x="-2.30" y="26.00" width="2.45" height="13.10" fill="#d14d15"/><rect x="0.00" y="26.00" width="2.45" height="13.10" fill="#af3f10"/><rect x="2.30" y="26.00" width="2.45" height="13.10" fill="#ce4b13"/><rect x="4.60" y="26.00" width="2.45" height="13.10" fill="#d94e14"/><rect x="6.90" y="26.00" width="2.45" height="13.10" fill="#ad3f10"/><rect x="9.20" y="26.00" width="2.45" height="13.10" fill="#b94311"/><rect x="11.50" y="26.00" width="2.45" height="13.10" fill="#af3f10"/><rect x="13.80" y="26.00" width="2.45" height="13.10" fill="#cd4a13"/><rect x="16.10" y="26.00" width="2.45" height="13.10" fill="#eb5516"/><rect x="18.40" y="26.00" width="2.45" height="13.10" fill="#e05115"/><rect x="20.70" y="26.00" width="2.45" height="13.10" fill="#c74813"/><rect x="23.00" y="26.00" width="2.45" height="13.10" fill="#ac3e10"/><rect x="25.30" y="26.00" width="2.45" height="13.10" fill="#e95415"/><rect x="27.60" y="26.00" width="2.45" height="13.10" fill="#bb4311"/><rect x="29.90" y="26.00" width="2.45" height="13.10" fill="#df5014"/><rect x="32.20" y="26.00" width="2.45" height="13.10" fill="#c34612"/><rect x="34.50" y="26.00" width="2.45" height="13.10" fill="#b44110"/><rect x="36.80" y="26.00" width="2.45" height="13.10" fill="#b44110"/><rect x="39.10" y="26.00" width="2.45" height="13.10" fill="#e25114"/><rect x="41.40" y="26.00" width="2.45" height="13.10" fill="#bb4310"/><rect x="43.70" y="26.00" width="2.45" height="13.10" fill="#ca4812"/><rect x="46.00" y="26.00" width="2.45" height="13.10" fill="#ab3d0f"/><rect x="48.30" y="26.00" width="2.45" height="13.10" fill="#e15114"/><rect x="50.60" y="26.00" width="2.45" height="13.10" fill="#df5013"/><rect x="52.90" y="26.00" width="2.45" height="13.10" fill="#ba4310"/><rect x="55.20" y="26.00" width="2.45" height="13.10" fill="#e65314"/><rect x="57.50" y="26.00" width="2.45" height="13.10" fill="#af3f10"/><rect x="59.80" y="26.00" width="2.45" height="13.10" fill="#cf4a13"/><rect x="62.10" y="26.00" width="2.45" height="13.10" fill="#d84e14"/><rect x="64.40" y="26.00" width="2.45" height="13.10" fill="#c34612"/><rect x="66.70" y="26.00" width="2.45" height="13.10" fill="#ed5516"/><rect x="69.00" y="26.00" width="2.45" height="13.10" fill="#93350d"/><rect x="71.30" y="26.00" width="2.45" height="13.10" fill="#bb4310"/><rect x="73.60" y="26.00" width="2.45" height="13.10" fill="#c14511"/><rect x="75.90" y="26.00" width="2.45" height="13.10" fill="#c54711"/><rect x="78.20" y="26.00" width="2.45" height="13.10" fill="#ae3e0f"/><rect x="80.50" y="26.00" width="2.45" height="13.10" fill="#a0390e"/><rect x="82.80" y="26.00" width="2.45" height="13.10" fill="#bc4410"/><rect x="85.10" y="26.00" width="2.45" height="13.10" fill="#b13f0f"/><rect x="87.40" y="26.00" width="2.45" height="13.10" fill="#b24010"/><rect x="89.70" y="26.00" width="2.45" height="13.10" fill="#ad3e0f"/><rect x="92.00" y="26.00" width="2.45" height="13.10" fill="#99360e"/><rect x="94.30" y="26.00" width="2.45" height="13.10" fill="#af3e10"/><rect x="96.60" y="26.00" width="2.45" height="13.10" fill="#c04411"/><rect x="98.90" y="26.00" width="2.45" height="13.10" fill="#a83b0f"/><rect x="101.20" y="26.00" width="2.45" height="13.10" fill="#c94712"/><rect x="103.50" y="26.00" width="2.45" height="13.10" fill="#a43b0f"/><rect x="105.80" y="26.00" width="2.45" height="13.10" fill="#ba4311"/><rect x="108.10" y="26.00" width="2.45" height="13.10" fill="#be4511"/><rect x="110.40" y="26.00" width="2.45" height="13.10" fill="#d64d13"/><rect x="112.70" y="26.00" width="2.45" height="13.10" fill="#bc4411"/><rect x="115.00" y="26.00" width="2.45" height="13.10" fill="#b03f0f"/><rect x="117.30" y="26.00" width="2.45" height="13.10" fill="#ca4912"/><rect x="119.60" y="26.00" width="2.45" height="13.10" fill="#ca4812"/><rect x="121.90" y="26.00" width="2.45" height="13.10" fill="#df5013"/><rect x="124.20" y="26.00" width="2.45" height="13.10" fill="#b44110"/><rect x="126.50" y="26.00" width="2.45" height="13.10" fill="#8e320d"/><rect x="128.80" y="26.00" width="2.45" height="13.10" fill="#b94111"/><rect x="131.10" y="26.00" width="2.45" height="13.10" fill="#92340d"/><rect x="133.40" y="26.00" width="2.45" height="13.10" fill="#b33f10"/><rect x="135.70" y="26.00" width="2.45" height="13.10" fill="#b64110"/><rect x="138.00" y="26.00" width="2.45" height="13.10" fill="#af3f10"/><rect x="140.30" y="26.00" width="2.45" height="13.10" fill="#d24b13"/><rect x="142.60" y="26.00" width="2.45" height="13.10" fill="#ce4a13"/><rect x="144.90" y="26.00" width="2.45" height="13.10" fill="#b34010"/><rect x="147.20" y="26.00" width="2.45" height="13.10" fill="#bf4411"/><rect x="-11.50" y="39.00" width="2.45" height="13.10" fill="#98370d"/><rect x="-9.20" y="39.00" width="2.45" height="13.10" fill="#d04b12"/><rect x="-6.90" y="39.00" width="2.45" height="13.10" fill="#9c380e"/><rect x="-4.60" y="39.00" width="2.45" height="13.10" fill="#ba4310"/><rect x="-2.30" y="39.00" width="2.45" height="13.10" fill="#ca4912"/><rect x="0.00" y="39.00" width="2.45" height="13.10" fill="#a93d0f"/><rect x="2.30" y="39.00" width="2.45" height="13.10" fill="#c94812"/><rect x="4.60" y="39.00" width="2.45" height="13.10" fill="#c84811"/><rect x="6.90" y="39.00" width="2.45" height="13.10" fill="#a93d0f"/><rect x="9.20" y="39.00" width="2.45" height="13.10" fill="#bc4310"/><rect x="11.50" y="39.00" width="2.45" height="13.10" fill="#b44110"/><rect x="13.80" y="39.00" width="2.45" height="13.10" fill="#c34612"/><rect x="16.10" y="39.00" width="2.45" height="13.10" fill="#e45215"/><rect x="18.40" y="39.00" width="2.45" height="13.10" fill="#de4f14"/><rect x="20.70" y="39.00" width="2.45" height="13.10" fill="#b64111"/><rect x="23.00" y="39.00" width="2.45" height="13.10" fill="#8f310d"/><rect x="25.30" y="39.00" width="2.45" height="13.10" fill="#b53f10"/><rect x="27.60" y="39.00" width="2.45" height="13.10" fill="#98340e"/><rect x="29.90" y="39.00" width="2.45" height="13.10" fill="#b94011"/><rect x="32.20" y="39.00" width="2.45" height="13.10" fill="#9b350e"/><rect x="34.50" y="39.00" width="2.45" height="13.10" fill="#a83b0f"/><rect x="36.80" y="39.00" width="2.45" height="13.10" fill="#ae3e10"/><rect x="39.10" y="39.00" width="2.45" height="13.10" fill="#d64c13"/><rect x="41.40" y="39.00" width="2.45" height="13.10" fill="#ab3d0f"/><rect x="43.70" y="39.00" width="2.45" height="13.10" fill="#b74110"/><rect x="46.00" y="39.00" width="2.45" height="13.10" fill="#92320d"/><rect x="48.30" y="39.00" width="2.45" height="13.10" fill="#c74512"/><rect x="50.60" y="39.00" width="2.45" height="13.10" fill="#b73f11"/><rect x="52.90" y="39.00" width="2.45" height="13.10" fill="#a83a0f"/><rect x="55.20" y="39.00" width="2.45" height="13.10" fill="#c84512"/><rect x="57.50" y="39.00" width="2.45" height="13.10" fill="#ae3e10"/><rect x="59.80" y="39.00" width="2.45" height="13.10" fill="#d94e14"/><rect x="62.10" y="39.00" width="2.45" height="13.10" fill="#dd4f14"/><rect x="64.40" y="39.00" width="2.45" height="13.10" fill="#bf4511"/><rect x="66.70" y="39.00" width="2.45" height="13.10" fill="#f05616"/><rect x="69.00" y="39.00" width="2.45" height="13.10" fill="#93350d"/><rect x="71.30" y="39.00" width="2.45" height="13.10" fill="#ba4311"/><rect x="73.60" y="39.00" width="2.45" height="13.10" fill="#c84812"/><rect x="75.90" y="39.00" width="2.45" height="13.10" fill="#bd4411"/><rect x="78.20" y="39.00" width="2.45" height="13.10" fill="#a73c0f"/><rect x="80.50" y="39.00" width="2.45" height="13.10" fill="#96350e"/><rect x="82.80" y="39.00" width="2.45" height="13.10" fill="#ae3d10"/><rect x="85.10" y="39.00" width="2.45" height="13.10" fill="#9b370e"/><rect x="87.40" y="39.00" width="2.45" height="13.10" fill="#9e380e"/><rect x="89.70" y="39.00" width="2.45" height="13.10" fill="#99360e"/><rect x="92.00" y="39.00" width="2.45" height="13.10" fill="#b34010"/><rect x="94.30" y="39.00" width="2.45" height="13.10" fill="#d24b13"/><rect x="96.60" y="39.00" width="2.45" height="13.10" fill="#d94e14"/><rect x="98.90" y="39.00" width="2.45" height="13.10" fill="#b44010"/><rect x="101.20" y="39.00" width="2.45" height="13.10" fill="#e35115"/><rect x="103.50" y="39.00" width="2.45" height="13.10" fill="#af3f10"/><rect x="105.80" y="39.00" width="2.45" height="13.10" fill="#ca4913"/><rect x="108.10" y="39.00" width="2.45" height="13.10" fill="#c24612"/><rect x="110.40" y="39.00" width="2.45" height="13.10" fill="#e95416"/><rect x="112.70" y="39.00" width="2.45" height="13.10" fill="#cf4b13"/><rect x="115.00" y="39.00" width="2.45" height="13.10" fill="#92320d"/><rect x="117.30" y="39.00" width="2.45" height="13.10" fill="#a93a0f"/><rect x="119.60" y="39.00" width="2.45" height="13.10" fill="#ad3c10"/><rect x="121.90" y="39.00" width="2.45" height="13.10" fill="#be4211"/><rect x="124.20" y="39.00" width="2.45" height="13.10" fill="#9d360e"/><rect x="126.50" y="39.00" width="2.45" height="13.10" fill="#a23a0f"/><rect x="128.80" y="39.00" width="2.45" height="13.10" fill="#d94f14"/><rect x="131.10" y="39.00" width="2.45" height="13.10" fill="#a43b0f"/><rect x="133.40" y="39.00" width="2.45" height="13.10" fill="#c64813"/><rect x="135.70" y="39.00" width="2.45" height="13.10" fill="#c74813"/><rect x="138.00" y="39.00" width="2.45" height="13.10" fill="#a63c0f"/><rect x="140.30" y="39.00" width="2.45" height="13.10" fill="#bf4511"/><rect x="142.60" y="39.00" width="2.45" height="13.10" fill="#ca4912"/><rect x="144.90" y="39.00" width="2.45" height="13.10" fill="#a53c0f"/><rect x="147.20" y="39.00" width="2.45" height="13.10" fill="#af3f10"/><rect x="-11.50" y="52.00" width="2.45" height="13.10" fill="#98360e"/><rect x="-9.20" y="52.00" width="2.45" height="13.10" fill="#d54c13"/><rect x="-6.90" y="52.00" width="2.45" height="13.10" fill="#a13a0f"/><rect x="-4.60" y="52.00" width="2.45" height="13.10" fill="#c14512"/><rect x="-2.30" y="52.00" width="2.45" height="13.10" fill="#cd4a13"/><rect x="0.00" y="52.00" width="2.45" height="13.10" fill="#a53b0f"/><rect x="2.30" y="52.00" width="2.45" height="13.10" fill="#c44711"/><rect x="4.60" y="52.00" width="2.45" height="13.10" fill="#cd4a12"/><rect x="6.90" y="52.00" width="2.45" height="13.10" fill="#b14010"/><rect x="9.20" y="52.00" width="2.45" height="13.10" fill="#b44110"/><rect x="11.50" y="52.00" width="2.45" height="13.10" fill="#94330d"/><rect x="13.80" y="52.00" width="2.45" height="13.10" fill="#9d360e"/><rect x="16.10" y="52.00" width="2.45" height="13.10" fill="#c54412"/><rect x="18.40" y="52.00" width="2.45" height="13.10" fill="#b84011"/><rect x="20.70" y="52.00" width="2.45" height="13.10" fill="#99350e"/><rect x="23.00" y="52.00" width="2.45" height="13.10" fill="#9c370e"/><rect x="25.30" y="52.00" width="2.45" height="13.10" fill="#c64612"/><rect x="27.60" y="52.00" width="2.45" height="13.10" fill="#a83b0f"/><rect x="29.90" y="52.00" width="2.45" height="13.10" fill="#c34512"/><rect x="32.20" y="52.00" width="2.45" height="13.10" fill="#a73b0f"/><rect x="34.50" y="52.00" width="2.45" height="13.10" fill="#a0390e"/><rect x="36.80" y="52.00" width="2.45" height="13.10" fill="#aa3c0f"/><rect x="39.10" y="52.00" width="2.45" height="13.10" fill="#d04a13"/><rect x="41.40" y="52.00" width="2.45" height="13.10" fill="#af3e10"/><rect x="43.70" y="52.00" width="2.45" height="13.10" fill="#b44010"/><rect x="46.00" y="52.00" width="2.45" height="13.10" fill="#b94412"/><rect x="48.30" y="52.00" width="2.45" height="13.10" fill="#fa5c19"/><rect x="50.60" y="52.00" width="2.45" height="13.10" fill="#f35a18"/><rect x="52.90" y="52.00" width="2.45" height="13.10" fill="#d44e15"/><rect x="55.20" y="52.00" width="2.45" height="13.10" fill="#f45a18"/><rect x="57.50" y="52.00" width="2.45" height="13.10" fill="#99360e"/><rect x="59.80" y="52.00" width="2.45" height="13.10" fill="#bb4211"/><rect x="62.10" y="52.00" width="2.45" height="13.10" fill="#c14412"/><rect x="64.40" y="52.00" width="2.45" height="13.10" fill="#af3e10"/><rect x="66.70" y="52.00" width="2.45" height="13.10" fill="#da4d14"/><rect x="69.00" y="52.00" width="2.45" height="13.10" fill="#9c3a0f"/><rect x="71.30" y="52.00" width="2.45" height="13.10" fill="#ca4b14"/><rect x="73.60" y="52.00" width="2.45" height="13.10" fill="#df5316"/><rect x="75.90" y="52.00" width="2.45" height="13.10" fill="#d74f15"/><rect x="78.20" y="52.00" width="2.45" height="13.10" fill="#b64312"/><rect x="80.50" y="52.00" width="2.45" height="13.10" fill="#a53b0f"/><rect x="82.80" y="52.00" width="2.45" height="13.10" fill="#b94211"/><rect x="85.10" y="52.00" width="2.45" height="13.10" fill="#b64111"/><rect x="87.40" y="52.00" width="2.45" height="13.10" fill="#ad3e10"/><rect x="89.70" y="52.00" width="2.45" height="13.10" fill="#b44010"/><rect x="92.00" y="52.00" width="2.45" height="13.10" fill="#af3f10"/><rect x="94.30" y="52.00" width="2.45" height="13.10" fill="#c74712"/><rect x="96.60" y="52.00" width="2.45" height="13.10" fill="#d84d14"/><rect x="98.90" y="52.00" width="2.45" height="13.10" fill="#b54110"/><rect x="101.20" y="52.00" width="2.45" height="13.10" fill="#dc4f14"/><rect x="103.50" y="52.00" width="2.45" height="13.10" fill="#892f0c"/><rect x="105.80" y="52.00" width="2.45" height="13.10" fill="#a73a0f"/><rect x="108.10" y="52.00" width="2.45" height="13.10" fill="#9f370e"/><rect x="110.40" y="52.00" width="2.45" height="13.10" fill="#bb4111"/><rect x="112.70" y="52.00" width="2.45" height="13.10" fill="#a6390f"/><rect x="115.00" y="52.00" width="2.45" height="13.10" fill="#af3f10"/><rect x="117.30" y="52.00" width="2.45" height="13.10" fill="#c64712"/><rect x="119.60" y="52.00" width="2.45" height="13.10" fill="#cb4912"/><rect x="121.90" y="52.00" width="2.45" height="13.10" fill="#df5114"/><rect x="124.20" y="52.00" width="2.45" height="13.10" fill="#b03f10"/><rect x="126.50" y="52.00" width="2.45" height="13.10" fill="#a23c10"/><rect x="128.80" y="52.00" width="2.45" height="13.10" fill="#e05316"/><rect x="131.10" y="52.00" width="2.45" height="13.10" fill="#af4111"/><rect x="133.40" y="52.00" width="2.45" height="13.10" fill="#cb4b14"/><rect x="135.70" y="52.00" width="2.45" height="13.10" fill="#d14d15"/><rect x="138.00" y="52.00" width="2.45" height="13.10" fill="#a53c0f"/><rect x="140.30" y="52.00" width="2.45" height="13.10" fill="#c84812"/><rect x="142.60" y="52.00" width="2.45" height="13.10" fill="#c94912"/><rect x="144.90" y="52.00" width="2.45" height="13.10" fill="#b04010"/><rect x="147.20" y="52.00" width="2.45" height="13.10" fill="#b84210"/><rect x="-11.50" y="65.00" width="2.45" height="13.10" fill="#95350d"/><rect x="-9.20" y="65.00" width="2.45" height="13.10" fill="#ca4812"/><rect x="-6.90" y="65.00" width="2.45" height="13.10" fill="#99370d"/><rect x="-4.60" y="65.00" width="2.45" height="13.10" fill="#c94812"/><rect x="-2.30" y="65.00" width="2.45" height="13.10" fill="#c54711"/><rect x="0.00" y="65.00" width="2.45" height="13.10" fill="#8a300d"/><rect x="2.30" y="65.00" width="2.45" height="13.10" fill="#a73a0f"/><rect x="4.60" y="65.00" width="2.45" height="13.10" fill="#a6390f"/><rect x="6.90" y="65.00" width="2.45" height="13.10" fill="#95330e"/><rect x="9.20" y="65.00" width="2.45" height="13.10" fill="#9f370e"/><rect x="11.50" y="65.00" width="2.45" height="13.10" fill="#a43b0e"/><rect x="13.80" y="65.00" width="2.45" height="13.10" fill="#b94210"/><rect x="16.10" y="65.00" width="2.45" height="13.10" fill="#e75314"/><rect x="18.40" y="65.00" width="2.45" height="13.10" fill="#d84e13"/><rect x="20.70" y="65.00" width="2.45" height="13.10" fill="#b34010"/><rect x="23.00" y="65.00" width="2.45" height="13.10" fill="#c14713"/><rect x="25.30" y="65.00" width="2.45" height="13.10" fill="#f45a18"/><rect x="27.60" y="65.00" width="2.45" height="13.10" fill="#c54914"/><rect x="29.90" y="65.00" width="2.45" height="13.10" fill="#eb5717"/><rect x="32.20" y="65.00" width="2.45" height="13.10" fill="#c24813"/><rect x="34.50" y="65.00" width="2.45" height="13.10" fill="#ad3e10"/><rect x="36.80" y="65.00" width="2.45" height="13.10" fill="#b64111"/><rect x="39.10" y="65.00" width="2.45" height="13.10" fill="#e25115"/><rect x="41.40" y="65.00" width="2.45" height="13.10" fill="#c44612"/><rect x="43.70" y="65.00" width="2.45" height="13.10" fill="#bf4411"/><rect x="46.00" y="65.00" width="2.45" height="13.10" fill="#af3f0f"/><rect x="48.30" y="65.00" width="2.45" height="13.10" fill="#e45214"/><rect x="50.60" y="65.00" width="2.45" height="13.10" fill="#e25114"/><rect x="52.90" y="65.00" width="2.45" height="13.10" fill="#c64711"/><rect x="55.20" y="65.00" width="2.45" height="13.10" fill="#ec5515"/><rect x="57.50" y="65.00" width="2.45" height="13.10" fill="#91320d"/><rect x="59.80" y="65.00" width="2.45" height="13.10" fill="#b33e10"/><rect x="62.10" y="65.00" width="2.45" height="13.10" fill="#b84011"/><rect x="64.40" y="65.00" width="2.45" height="13.10" fill="#a4390f"/><rect x="66.70" y="65.00" width="2.45" height="13.10" fill="#bf4211"/><rect x="69.00" y="65.00" width="2.45" height="13.10" fill="#a63d11"/><rect x="71.30" y="65.00" width="2.45" height="13.10" fill="#c44814"/><rect x="73.60" y="65.00" width="2.45" height="13.10" fill="#e15316"/><rect x="75.90" y="65.00" width="2.45" height="13.10" fill="#cf4d15"/><rect x="78.20" y="65.00" width="2.45" height="13.10" fill="#b14112"/><rect x="80.50" y="65.00" width="2.45" height="13.10" fill="#8b300d"/><rect x="82.80" y="65.00" width="2.45" height="13.10" fill="#9d360e"/><rect x="85.10" y="65.00" width="2.45" height="13.10" fill="#94330d"/><rect x="87.40" y="65.00" width="2.45" height="13.10" fill="#94330d"/><rect x="89.70" y="65.00" width="2.45" height="13.10" fill="#95330e"/><rect x="92.00" y="65.00" width="2.45" height="13.10" fill="#bb4312"/><rect x="94.30" y="65.00" width="2.45" height="13.10" fill="#d64d14"/><rect x="96.60" y="65.00" width="2.45" height="13.10" fill="#dd5015"/><rect x="98.90" y="65.00" width="2.45" height="13.10" fill="#bd4412"/><rect x="101.20" y="65.00" width="2.45" height="13.10" fill="#ea5516"/><rect x="103.50" y="65.00" width="2.45" height="13.10" fill="#8f310d"/><rect x="105.80" y="65.00" width="2.45" height="13.10" fill="#9e360e"/><rect x="108.10" y="65.00" width="2.45" height="13.10" fill="#a1380f"/><rect x="110.40" y="65.00" width="2.45" height="13.10" fill="#bc4111"/><rect x="112.70" y="65.00" width="2.45" height="13.10" fill="#a5390f"/><rect x="115.00" y="65.00" width="2.45" height="13.10" fill="#9e380e"/><rect x="117.30" y="65.00" width="2.45" height="13.10" fill="#b03e10"/><rect x="119.60" y="65.00" width="2.45" height="13.10" fill="#b84110"/><rect x="121.90" y="65.00" width="2.45" height="13.10" fill="#c54612"/><rect x="124.20" y="65.00" width="2.45" height="13.10" fill="#a33a0f"/><rect x="126.50" y="65.00" width="2.45" height="13.10" fill="#90330d"/><rect x="128.80" y="65.00" width="2.45" height="13.10" fill="#bd4311"/><rect x="131.10" y="65.00" width="2.45" height="13.10" fill="#8e320d"/><rect x="133.40" y="65.00" width="2.45" height="13.10" fill="#b03e10"/><rect x="135.70" y="65.00" width="2.45" height="13.10" fill="#b13f10"/><rect x="138.00" y="65.00" width="2.45" height="13.10" fill="#91320d"/><rect x="140.30" y="65.00" width="2.45" height="13.10" fill="#b03d10"/><rect x="142.60" y="65.00" width="2.45" height="13.10" fill="#b13d10"/><rect x="144.90" y="65.00" width="2.45" height="13.10" fill="#8e310d"/><rect x="147.20" y="65.00" width="2.45" height="13.10" fill="#a0370f"/><rect x="-11.50" y="78.00" width="2.45" height="13.10" fill="#8e320d"/><rect x="-9.20" y="78.00" width="2.45" height="13.10" fill="#bb4211"/><rect x="-6.90" y="78.00" width="2.45" height="13.10" fill="#96350d"/><rect x="-4.60" y="78.00" width="2.45" height="13.10" fill="#b33f10"/><rect x="-2.30" y="78.00" width="2.45" height="13.10" fill="#b84111"/><rect x="0.00" y="78.00" width="2.45" height="13.10" fill="#a33b0f"/><rect x="2.30" y="78.00" width="2.45" height="13.10" fill="#ca4912"/><rect x="4.60" y="78.00" width="2.45" height="13.10" fill="#c94912"/><rect x="6.90" y="78.00" width="2.45" height="13.10" fill="#b14010"/><rect x="9.20" y="78.00" width="2.45" height="13.10" fill="#b84310"/><rect x="11.50" y="78.00" width="2.45" height="13.10" fill="#99360e"/><rect x="13.80" y="78.00" width="2.45" height="13.10" fill="#b34010"/><rect x="16.10" y="78.00" width="2.45" height="13.10" fill="#cc4812"/><rect x="18.40" y="78.00" width="2.45" height="13.10" fill="#c14411"/><rect x="20.70" y="78.00" width="2.45" height="13.10" fill="#a33a0f"/><rect x="23.00" y="78.00" width="2.45" height="13.10" fill="#ae3f10"/><rect x="25.30" y="78.00" width="2.45" height="13.10" fill="#e55316"/><rect x="27.60" y="78.00" width="2.45" height="13.10" fill="#be4512"/><rect x="29.90" y="78.00" width="2.45" height="13.10" fill="#d34c14"/><rect x="32.20" y="78.00" width="2.45" height="13.10" fill="#c14612"/><rect x="34.50" y="78.00" width="2.45" height="13.10" fill="#a73c0f"/><rect x="36.80" y="78.00" width="2.45" height="13.10" fill="#ad3f0f"/><rect x="39.10" y="78.00" width="2.45" height="13.10" fill="#db4f14"/><rect x="41.40" y="78.00" width="2.45" height="13.10" fill="#bc4411"/><rect x="43.70" y="78.00" width="2.45" height="13.10" fill="#c44711"/><rect x="46.00" y="78.00" width="2.45" height="13.10" fill="#a43b0f"/><rect x="48.30" y="78.00" width="2.45" height="13.10" fill="#df5114"/><rect x="50.60" y="78.00" width="2.45" height="13.10" fill="#d84e13"/><rect x="52.90" y="78.00" width="2.45" height="13.10" fill="#ba4311"/><rect x="55.20" y="78.00" width="2.45" height="13.10" fill="#d64d13"/><rect x="57.50" y="78.00" width="2.45" height="13.10" fill="#ba4311"/><rect x="59.80" y="78.00" width="2.45" height="13.10" fill="#d44d14"/><rect x="62.10" y="78.00" width="2.45" height="13.10" fill="#e45215"/><rect x="64.40" y="78.00" width="2.45" height="13.10" fill="#c34712"/><rect x="66.70" y="78.00" width="2.45" height="13.10" fill="#f65917"/><rect x="69.00" y="78.00" width="2.45" height="13.10" fill="#9b380e"/><rect x="71.30" y="78.00" width="2.45" height="13.10" fill="#bd4411"/><rect x="73.60" y="78.00" width="2.45" height="13.10" fill="#ca4812"/><rect x="75.90" y="78.00" width="2.45" height="13.10" fill="#c54712"/><rect x="78.20" y="78.00" width="2.45" height="13.10" fill="#ab3d10"/><rect x="80.50" y="78.00" width="2.45" height="13.10" fill="#892f0c"/><rect x="82.80" y="78.00" width="2.45" height="13.10" fill="#9d360e"/><rect x="85.10" y="78.00" width="2.45" height="13.10" fill="#95330e"/><rect x="87.40" y="78.00" width="2.45" height="13.10" fill="#98350e"/><rect x="89.70" y="78.00" width="2.45" height="13.10" fill="#97340e"/><rect x="92.00" y="78.00" width="2.45" height="13.10" fill="#ba4311"/><rect x="94.30" y="78.00" width="2.45" height="13.10" fill="#cc4913"/><rect x="96.60" y="78.00" width="2.45" height="13.10" fill="#d54c13"/><rect x="98.90" y="78.00" width="2.45" height="13.10" fill="#bf4411"/><rect x="101.20" y="78.00" width="2.45" height="13.10" fill="#de5014"/><rect x="103.50" y="78.00" width="2.45" height="13.10" fill="#a13a0e"/><rect x="105.80" y="78.00" width="2.45" height="13.10" fill="#b44110"/><rect x="108.10" y="78.00" width="2.45" height="13.10" fill="#c14611"/><rect x="110.40" y="78.00" width="2.45" height="13.10" fill="#d04b13"/><rect x="112.70" y="78.00" width="2.45" height="13.10" fill="#c64812"/><rect x="115.00" y="78.00" width="2.45" height="13.10" fill="#bc4613"/><rect x="117.30" y="78.00" width="2.45" height="13.10" fill="#d24e15"/><rect x="119.60" y="78.00" width="2.45" height="13.10" fill="#dd5216"/><rect x="121.90" y="78.00" width="2.45" height="13.10" fill="#e95617"/><rect x="124.20" y="78.00" width="2.45" height="13.10" fill="#c94a14"/><rect x="126.50" y="78.00" width="2.45" height="13.10" fill="#a83e11"/><rect x="128.80" y="78.00" width="2.45" height="13.10" fill="#e25316"/><rect x="131.10" y="78.00" width="2.45" height="13.10" fill="#aa3f11"/><rect x="133.40" y="78.00" width="2.45" height="13.10" fill="#d64f15"/><rect x="135.70" y="78.00" width="2.45" height="13.10" fill="#db5116"/><rect x="138.00" y="78.00" width="2.45" height="13.10" fill="#a63c0f"/><rect x="140.30" y="78.00" width="2.45" height="13.10" fill="#c44711"/><rect x="142.60" y="78.00" width="2.45" height="13.10" fill="#c14611"/><rect x="144.90" y="78.00" width="2.45" height="13.10" fill="#af3f10"/><rect x="147.20" y="78.00" width="2.45" height="13.10" fill="#b54110"/><rect x="-11.50" y="91.00" width="2.45" height="13.10" fill="#90340d"/><rect x="-9.20" y="91.00" width="2.45" height="13.10" fill="#c64812"/><rect x="-6.90" y="91.00" width="2.45" height="13.10" fill="#9f390e"/><rect x="-4.60" y="91.00" width="2.45" height="13.10" fill="#ba4311"/><rect x="-2.30" y="91.00" width="2.45" height="13.10" fill="#c84812"/><rect x="0.00" y="91.00" width="2.45" height="13.10" fill="#b54312"/><rect x="2.30" y="91.00" width="2.45" height="13.10" fill="#da5016"/><rect x="4.60" y="91.00" width="2.45" height="13.10" fill="#dc5116"/><rect x="6.90" y="91.00" width="2.45" height="13.10" fill="#b64312"/><rect x="9.20" y="91.00" width="2.45" height="13.10" fill="#c34813"/><rect x="11.50" y="91.00" width="2.45" height="13.10" fill="#a23b0e"/><rect x="13.80" y="91.00" width="2.45" height="13.10" fill="#bd4411"/><rect x="16.10" y="91.00" width="2.45" height="13.10" fill="#df5114"/><rect x="18.40" y="91.00" width="2.45" height="13.10" fill="#da4f13"/><rect x="20.70" y="91.00" width="2.45" height="13.10" fill="#af3f10"/><rect x="23.00" y="91.00" width="2.45" height="13.10" fill="#aa3e0f"/><rect x="25.30" y="91.00" width="2.45" height="13.10" fill="#d94e13"/><rect x="27.60" y="91.00" width="2.45" height="13.10" fill="#b64210"/><rect x="29.90" y="91.00" width="2.45" height="13.10" fill="#d04b13"/><rect x="32.20" y="91.00" width="2.45" height="13.10" fill="#b84310"/><rect x="34.50" y="91.00" width="2.45" height="13.10" fill="#ba4311"/><rect x="36.80" y="91.00" width="2.45" height="13.10" fill="#bf4411"/><rect x="39.10" y="91.00" width="2.45" height="13.10" fill="#f25716"/><rect x="41.40" y="91.00" width="2.45" height="13.10" fill="#c94812"/><rect x="43.70" y="91.00" width="2.45" height="13.10" fill="#c94812"/><rect x="46.00" y="91.00" width="2.45" height="13.10" fill="#b54111"/><rect x="48.30" y="91.00" width="2.45" height="13.10" fill="#eb5516"/><rect x="50.60" y="91.00" width="2.45" height="13.10" fill="#e95416"/><rect x="52.90" y="91.00" width="2.45" height="13.10" fill="#ca4913"/><rect x="55.20" y="91.00" width="2.45" height="13.10" fill="#ec5516"/><rect x="57.50" y="91.00" width="2.45" height="13.10" fill="#ad3e0f"/><rect x="59.80" y="91.00" width="2.45" height="13.10" fill="#cc4912"/><rect x="62.10" y="91.00" width="2.45" height="13.10" fill="#e05114"/><rect x="64.40" y="91.00" width="2.45" height="13.10" fill="#c34611"/><rect x="66.70" y="91.00" width="2.45" height="13.10" fill="#f15615"/><rect x="69.00" y="91.00" width="2.45" height="13.10" fill="#87300c"/><rect x="71.30" y="91.00" width="2.45" height="13.10" fill="#b13f10"/><rect x="73.60" y="91.00" width="2.45" height="13.10" fill="#b33f10"/><rect x="75.90" y="91.00" width="2.45" height="13.10" fill="#b74110"/><rect x="78.20" y="91.00" width="2.45" height="13.10" fill="#95350d"/><rect x="80.50" y="91.00" width="2.45" height="13.10" fill="#95340e"/><rect x="82.80" y="91.00" width="2.45" height="13.10" fill="#af3e10"/><rect x="85.10" y="91.00" width="2.45" height="13.10" fill="#a53a0f"/><rect x="87.40" y="91.00" width="2.45" height="13.10" fill="#a1390f"/><rect x="89.70" y="91.00" width="2.45" height="13.10" fill="#9f380e"/><rect x="92.00" y="91.00" width="2.45" height="13.10" fill="#95340e"/><rect x="94.30" y="91.00" width="2.45" height="13.10" fill="#a3380f"/><rect x="96.60" y="91.00" width="2.45" height="13.10" fill="#b13d10"/><rect x="98.90" y="91.00" width="2.45" height="13.10" fill="#99350e"/><rect x="101.20" y="91.00" width="2.45" height="13.10" fill="#bf4211"/><rect x="103.50" y="91.00" width="2.45" height="13.10" fill="#98360e"/><rect x="105.80" y="91.00" width="2.45" height="13.10" fill="#a83b0f"/><rect x="108.10" y="91.00" width="2.45" height="13.10" fill="#ac3d0f"/><rect x="110.40" y="91.00" width="2.45" height="13.10" fill="#c14411"/><rect x="112.70" y="91.00" width="2.45" height="13.10" fill="#b84111"/><rect x="115.00" y="91.00" width="2.45" height="13.10" fill="#99350e"/><rect x="117.30" y="91.00" width="2.45" height="13.10" fill="#aa3b0f"/><rect x="119.60" y="91.00" width="2.45" height="13.10" fill="#ae3c10"/><rect x="121.90" y="91.00" width="2.45" height="13.10" fill="#b43e10"/><rect x="124.20" y="91.00" width="2.45" height="13.10" fill="#9f370e"/><rect x="126.50" y="91.00" width="2.45" height="13.10" fill="#a23c10"/><rect x="128.80" y="91.00" width="2.45" height="13.10" fill="#d64f15"/><rect x="131.10" y="91.00" width="2.45" height="13.10" fill="#a93f11"/><rect x="133.40" y="91.00" width="2.45" height="13.10" fill="#d64f15"/><rect x="135.70" y="91.00" width="2.45" height="13.10" fill="#db5116"/><rect x="138.00" y="91.00" width="2.45" height="13.10" fill="#9c370e"/><rect x="140.30" y="91.00" width="2.45" height="13.10" fill="#b13e10"/><rect x="142.60" y="91.00" width="2.45" height="13.10" fill="#b94111"/><rect x="144.90" y="91.00" width="2.45" height="13.10" fill="#a0390f"/><rect x="147.20" y="91.00" width="2.45" height="13.10" fill="#a3390f"/></pattern><pattern id="rrb" width="11.5" height="13" patternUnits="userSpaceOnUse"><rect y="11.2" width="11.5" height="1.8" fill="#4a1804" fill-opacity="0.3"/><rect y="0" width="11.5" height="2.4" fill="#ff8a40" fill-opacity=".07"/></pattern></defs><polygon points="0.00,314.00 1000.00,314.00 1000.00,-30.00 271.00,-30.00 285.00,0.00" fill="url(#rrp)"/><polygon points="0.00,314.00 1000.00,314.00 1000.00,-30.00 271.00,-30.00 285.00,0.00" fill="url(#rrb)"/></svg><svg class="abs" style="left:0;top:0" width="1184" height="930" viewBox="0 0 1184 930"><polygon points="124.00,511.00 593.75,372.50 828.75,394.25 1060.00,482.00 1060.00,300.00 100.00,300.00 100.00,511.00" fill="#fff"/><polygon points="646.25,834.25 1053.50,702.35 1053.50,730.00 646.25,862.00" fill="#fff"/><polygon points="200.00,533.50 213.75,532.60 212.00,741.25 211.70,760.00 200.00,760.00" fill="#fff"/><polygon points="213.20,560.00 653.60,605.00 653.00,628.00 212.90,578.00" fill="#d2d2d2"/><polygon points="653.60,605.00 1053.50,560.00 1053.50,575.00 653.00,628.00" fill="#ffffff"/><polygon points="212.00,741.25 646.25,834.25 646.25,857.50 211.70,759.50" fill="#d0d0d0"/><defs><filter id="conc" x="0" y="0" width="1" height="1"><feTurbulence type="fractalNoise" baseFrequency="0.09 0.22" numOctaves="3" seed="4" result="n"/><feColorMatrix in="n" type="matrix" values="0 0 0 0 0.12  0 0 0 0 0.12  0 0 0 0 0.1  1.6 0 0 0 -0.62" result="d"/><feComposite in="d" in2="SourceGraphic" operator="in" result="dc"/><feMerge><feMergeNode in="SourceGraphic"/><feMergeNode in="dc"/></feMerge></filter><linearGradient id="gevL" x1="0" x2="1" y1="0" y2="0"><stop offset="0" stop-color="#6b6b67"/><stop offset="1" stop-color="#787873"/></linearGradient><linearGradient id="gevR" x1="0" x2="1" y1="0" y2="0"><stop offset="0" stop-color="#8f8f89"/><stop offset="1" stop-color="#94948d"/></linearGradient></defs><polygon points="124.00,510.40 678.10,553.15 678.10,571.00 124.00,525.00" fill="url(#gevL)" filter="url(#conc)"/><polygon points="677.50,553.15 1053.50,528.15 1053.50,541.25 677.50,571.00" fill="url(#gevR)" filter="url(#conc)"/><defs><pattern id="pvL" width="7" height="10.4" patternUnits="userSpaceOnUse" patternTransform="matrix(1,-0.25,0,1,0,0)"><rect width="7" height="10.4" fill="#aa453a"/><rect x=".5" y=".5" width="6" height="4.2" fill="#932623"/><rect x="-3" y="5.7" width="6" height="4.2" fill="#932623"/><rect x="4" y="5.7" width="6" height="4.2" fill="#932623"/></pattern><pattern id="pvR" width="7" height="11.2" patternUnits="userSpaceOnUse" patternTransform="matrix(1,0.25,0,1,0,0)"><rect width="7" height="11.2" fill="#863027"/><rect x=".5" y=".5" width="6" height="4.6" fill="#6f1a19"/><rect x="-3" y="6.1" width="6" height="4.6" fill="#6f1a19"/><rect x="4" y="6.1" width="6" height="4.6" fill="#6f1a19"/></pattern><pattern id="pin" width="11" height="10.4" patternUnits="userSpaceOnUse" patternTransform="matrix(1,0.14,0,1,0,0)"><rect width="11" height="10.4" fill="#c07a70"/><rect x=".5" y=".5" width="10" height="4.2" fill="#ad5a58"/><rect x="-5" y="5.7" width="10" height="4.2" fill="#ad5a58"/><rect x="6" y="5.7" width="10" height="4.2" fill="#ad5a58"/></pattern><pattern id="pin2" width="11" height="10.4" patternUnits="userSpaceOnUse" patternTransform="matrix(1,0.14,0,1,0,0)"><rect width="11" height="10.4" fill="#a86460"/><rect x=".5" y=".5" width="10" height="4.2" fill="#93464a"/><rect x="-5" y="5.7" width="10" height="4.2" fill="#93464a"/><rect x="6" y="5.7" width="10" height="4.2" fill="#93464a"/></pattern><linearGradient id="gin" x1="0" x2="0" y1="0" y2="1"><stop offset="0" stop-color="#3c0c0c"/><stop offset=".22" stop-color="#6a1818" stop-opacity=".75"/><stop offset=".36" stop-color="#8a2220" stop-opacity="0"/></linearGradient><clipPath id="co1"><path d="M380.6,717.8 L380.6,641.5 C381.5,630 394,621.2 408.5,621.2 C421,621.2 433.5,633 436.9,647 L437.2,727.2 Z"/></clipPath><clipPath id="cf1"><path d="M395.8,715.5 L396.6,649 C397.3,637 404,624.5 416,620.6 C431,620 446,632 452,648 L452,725 Z"/></clipPath><clipPath id="co4"><path d="M665.6,761 L665.8,680.5 C667,669 676,650 692,646 C700,645 707,658 708,675 L707.3,750.4 Z"/></clipPath><linearGradient id="gin4" x1="0" x2="0" y1="0" y2="1"><stop offset="0" stop-color="#4a0e0e"/><stop offset=".3" stop-color="#5e1414" stop-opacity=".6"/><stop offset=".5" stop-color="#6a1818" stop-opacity="0"/></linearGradient></defs><polygon points="260.10,602.50 274.90,604.10 274.20,693.50 260.10,696.20" fill="url(#pvL)"/><polygon points="260.10,696.20 274.20,693.50 324.90,702.20 325.20,707.00" fill="#8e2623"/><polygon points="274.90,604.10 326.20,610.80 324.90,702.20 274.20,693.50" fill="#e2a33a"/><polygon points="276.68,606.12 279.50,606.49 278.80,690.25 276.01,689.78" fill="#f0b654"/><polygon points="279.50,606.49 303.86,609.70 302.89,694.34 278.80,690.25" fill="#eff1f1"/><polygon points="311.30,610.67 326.17,612.63 324.96,698.09 310.25,695.59" fill="#eff1f1"/><polygon points="305.66,609.93 308.74,610.34 307.71,695.16 304.67,694.64" fill="#f0b654"/><g transform="matrix(1,0,0,1,0,0)"><path d="M380.6,717.8 L380.6,641.5 C381.5,630 394,621.2 408.5,621.2 C421,621.2 433.5,633 436.9,647 L437.2,727.2 Z" fill="url(#pvL)"/><path d="M380.6,717.8 L380.6,641.5 C381.5,630 394,621.2 408.5,621.2 C421,621.2 433.5,633 436.9,647 L437.2,727.2 Z" fill="url(#gin)" fill-opacity="0.8"/><polygon points="380.6,717.8 395.8,715.5 437,722.6 437.2,727.2" fill="#8e2623"/><g clip-path="url(#co1)"><g transform="translate(0,0)"><path d="M395.8,715.5 L396.6,649 C397.3,637 404,624.5 416,620.6 C431,620 446,632 452,648 L452,725 Z" fill="#e0a23a"/><path d="M397.6,715 L398.4,649 C399,638 405,627 416,622.6" fill="none" stroke="#f2ba58" stroke-width="1.6"/><g clip-path="url(#cf1)"><path d="M401,654.2 L401.2,649 C402,639.5 407.5,629 417.5,625 C431,624.5 443,636 448,651 L448,662 Z" fill="url(#pin)"/><polygon points="401,663.5 419.6,666.3 419.6,714.6 400.6,711.3" fill="url(#pin)"/><polygon points="427,667.4 448,670.5 448,719.6 427,715.9" fill="url(#pin)"/><path d="M397,658.4 L452,666.6" stroke="#f2ba58" stroke-width="1" fill="none"/><polygon points="432.8,640 437.5,648 437.5,657.5 432.8,656.8" fill="#fff"/><polygon points="433.4,668.3 437.5,669 437.5,718 433.4,713" fill="#fff"/><polygon points="433.4,712 437.5,712.6 437.5,718.2 433.4,717.4" fill="#c89860"/></g></g></g></g><g transform="matrix(0.986,0.035,0,1.025,98.1284,-17.451)"><path d="M380.6,717.8 L380.6,641.5 C381.5,630 394,621.2 408.5,621.2 C421,621.2 433.5,633 436.9,647 L437.2,727.2 Z" fill="url(#pvL)"/><path d="M380.6,717.8 L380.6,641.5 C381.5,630 394,621.2 408.5,621.2 C421,621.2 433.5,633 436.9,647 L437.2,727.2 Z" fill="url(#gin)" fill-opacity="0.8"/><polygon points="380.6,717.8 395.8,715.5 437,722.6 437.2,727.2" fill="#8e2623"/><g clip-path="url(#co1)"><g transform="translate(0,0)"><path d="M395.8,715.5 L396.6,649 C397.3,637 404,624.5 416,620.6 C431,620 446,632 452,648 L452,725 Z" fill="#e0a23a"/><path d="M397.6,715 L398.4,649 C399,638 405,627 416,622.6" fill="none" stroke="#f2ba58" stroke-width="1.6"/><g clip-path="url(#cf1)"><path d="M401,654.2 L401.2,649 C402,639.5 407.5,629 417.5,625 C431,624.5 443,636 448,651 L448,662 Z" fill="url(#pin)"/><polygon points="401,663.5 419.6,666.3 419.6,714.6 400.6,711.3" fill="url(#pin)"/><polygon points="427,667.4 448,670.5 448,719.6 427,715.9" fill="url(#pin)"/><path d="M397,658.4 L452,666.6" stroke="#f2ba58" stroke-width="1" fill="none"/><polygon points="401,663.5 412,665 412,713.4 400.6,711.3" fill="#7a3a44" fill-opacity=".55"/><polygon points="401.2,650 405,634 412,627.5 412,655.8 401,654.2" fill="#7a3a44" fill-opacity=".5"/><polygon points="431,715 437.5,716.2 437.5,720 431,718.6" fill="#c89860"/></g></g></g></g><g transform="matrix(1.108,0.012,0,1.105,145.195,-46.7932)"><path d="M380.6,717.8 L380.6,641.5 C381.5,630 394,621.2 408.5,621.2 C421,621.2 433.5,633 436.9,647 L437.2,727.2 Z" fill="url(#pvL)"/><path d="M380.6,717.8 L380.6,641.5 C381.5,630 394,621.2 408.5,621.2 C421,621.2 433.5,633 436.9,647 L437.2,727.2 Z" fill="url(#gin)" fill-opacity="0.6"/><polygon points="380.6,717.8 392.8,715.5 437,722.6 437.2,727.2" fill="#8e2623"/><g clip-path="url(#co1)"><g transform="translate(-3,0)"><path d="M395.8,715.5 L396.6,649 C397.3,637 404,624.5 416,620.6 C431,620 446,632 452,648 L452,725 Z" fill="#eab047"/><path d="M397.6,715 L398.4,649 C399,638 405,627 416,622.6" fill="none" stroke="#f8c866" stroke-width="1.6"/><g clip-path="url(#cf1)"><path d="M401,650 L401.2,649 C402,639.5 407.5,629 417.5,625 C431,624.5 443,636 448,651 L448,657.8 Z" fill="#ecc47c"/><polygon points="401,659.3 419.6,662.1 419.6,714.6 400.6,711.3" fill="#e8bc70"/><polygon points="427,663.2 448,666.3 448,719.6 427,715.9" fill="#e8bc70"/><path d="M397,654.2 L452,662.4" stroke="#f8c866" stroke-width="1" fill="none"/><polygon points="400.6,689 419.6,692 419.6,714.6 400.6,711.3" fill="#b67a2e"/><polygon points="427,694 448,697 448,719.6 427,715.9" fill="#b67a2e"/><path d="M404,648 L404,638 M408,650 L408,632 M413,651 L413,628 M421,652 L421,627 M428,653 L428,630" stroke="#f6d898" stroke-width=".9" fill="none"/><path d="M404,688 L404,662 L410,663 L410,689 M413,690 L413,664 L418,665 L418,690" stroke="#f6d898" stroke-width=".8" fill="none"/><path d="M417.5,624.5 l2.2,4.5 l1.6,-4.2" stroke="#fff" stroke-width="1.1" fill="none"/><polygon points="437.4,640 441,648 441,716 437.4,712" fill="#9a6a78"/></g></g></g></g><path d="M665.6,761 L665.8,680.5 C667,669 676,650 692,646 C700,645 707,658 708,675 L707.3,750.4 Z" fill="url(#pvR)"/><path d="M665.6,761 L665.8,680.5 C667,669 676,650 692,646 C700,645 707,658 708,675 L707.3,750.4 Z" fill="url(#gin4)"/><polygon points="665.4,754.4 687,747.4 707.3,750.4 665.6,761" fill="#7c1c1b"/><g clip-path="url(#co4)"><path d="M665.0,754.4 L667.6,680 C669.5,668 675,653 682.6,649.4 C686.5,652 689.2,662 689.6,672 L687.0,747.4 Z" fill="#f4c24c"/><path d="M670.6,679.3 C672.5,668 677,657.5 682.4,654 C684.6,657 686.2,665 686.4,674.6 L686.3,676.2 Z" fill="#9a5c6a"/><polygon points="670.2,690.2 683.4,686.8 682.2,741.6 668.9,746.6" fill="#8e5864"/><polygon points="669.0,739.5 682.3,735 682.2,741.6 668.9,746.6" fill="#c9a462"/><polygon points="683.4,686.8 686.0,686.2 684.8,743 682.2,741.6" fill="#e3b058"/><path d="M667.4,688.6 L689,683 M667.8,684 L689.2,678.6" stroke="#f9d266" stroke-width="1" fill="none"/></g><polygon points="882.50,632.80 930.20,625.60 926.30,744.60 878.00,759.40" fill="url(#pvR)"/><polygon points="914.00,628.00 930.20,625.60 926.30,744.60 910.00,749.50" fill="#5f1515" fill-opacity=".35"/><polygon points="878.00,752.60 910.00,742.00 926.30,744.60 878.00,759.40" fill="#c8780f"/><polygon points="882.50,632.80 915.00,628.00 910.50,742.00 878.00,752.80" fill="#f2bf4e"/><polygon points="901.00,630.20 915.00,628.00 910.50,742.00 897.00,746.40" fill="#e2ac44"/><polygon points="905.60,631.00 908.00,630.60 903.60,735.00 901.40,735.80" fill="#8a5868"/><polygon points="885.40,663.60 889.40,663.00 888.60,677.60 884.80,678.40" fill="#9a5e58"/><path d="M886.6,636 L884,700 M892.6,635 L890,744 M897.6,634 L894.6,746" stroke="#e0aa40" stroke-width=".9" fill="none"/><path d="M912,630 L907.6,742" stroke="#f8d06a" stroke-width="1.4" fill="none"/><polygon points="962.30,602.60 982.20,600.40 978.60,676.00 959.40,680.60" fill="url(#pvR)"/><polygon points="962.30,602.60 982.20,600.40 978.60,676.00 959.40,680.60" fill="#5f1515" fill-opacity=".35"/><polygon points="962.30,602.80 967.40,602.20 963.60,679.00 959.40,680.40" fill="#e6b04a"/><path d="M966.4,603 L962.8,678.6" stroke="#f6cc62" stroke-width="1.2" fill="none"/><polygon points="959.40,680.40 963.60,679.00 978.60,676.00 959.50,683.00" fill="#8a2220"/></svg><svg class="abs" style="left:0;top:0" width="1184" height="930" viewBox="0 0 1184 930"><path d="M145.3,878 L146.4,845" stroke="#1a1aff" stroke-width="1"/><path d="M146.5,841 l-1.8,6 h3.4 z" fill="#1a1aff"/><path d="M145.5,833 h3 l-3,5 h3" stroke="#3a3aff" stroke-width=".8" fill="none"/><path d="M145.3,878 L108.4,875.6" stroke="#00e000" stroke-width="1.2" stroke-dasharray="9 3 6 4 5 5 4 30"/><path d="M145.3,878 L175,876.2" stroke="#ff2020" stroke-width="1.2" stroke-dasharray="10 3 7 3 5 30"/></svg>
</div></div>
<div id="tb3d" class="abs"></div>
<svg class="abs" style="left:0;top:0" width="1184" height="930" viewBox="0 0 1184 930"><rect x="99.5" y="120.5" width="41.5" height="31" rx="3.5" fill="url(#gsel)" stroke="#c4c4c4" stroke-width="1"/><rect x="130" y="121" width="1" height="30" fill="#eeeeee"/><rect x="129" y="121" width="1" height="30" fill="#bebebe"/><rect x="467.5" y="120.5" width="41.5" height="31" rx="3.5" fill="url(#gsel)" stroke="#c4c4c4" stroke-width="1"/><rect x="498" y="121" width="1" height="30" fill="#eeeeee"/><rect x="497" y="121" width="1" height="30" fill="#bebebe"/><circle cx="116" cy="136.2" r="8.2" fill="url(#gsph)"/><g transform="rotate(0 116 136.2)"><path d="M116,135.4 l-3.7,-3.9 h2.2 q.3,-2.6 .1,-4.9 h2.8 q-.2,2.3 .1,4.9 h2.2 z" fill="#121212"/><circle cx="116" cy="125.8" r="1.9" fill="#9c9c9c" stroke="#2a2a2a" stroke-width="1"/></g><g transform="rotate(90 116 136.2)"><path d="M116,135.4 l-3.7,-3.9 h2.2 q.3,-2.6 .1,-4.9 h2.8 q-.2,2.3 .1,4.9 h2.2 z" fill="#121212"/><circle cx="116" cy="125.8" r="1.9" fill="#9c9c9c" stroke="#2a2a2a" stroke-width="1"/></g><g transform="rotate(180 116 136.2)"><path d="M116,135.4 l-3.7,-3.9 h2.2 q.3,-2.6 .1,-4.9 h2.8 q-.2,2.3 .1,4.9 h2.2 z" fill="#121212"/><circle cx="116" cy="125.8" r="1.9" fill="#9c9c9c" stroke="#2a2a2a" stroke-width="1"/></g><g transform="rotate(270 116 136.2)"><path d="M116,135.4 l-3.7,-3.9 h2.2 q.3,-2.6 .1,-4.9 h2.8 q-.2,2.3 .1,4.9 h2.2 z" fill="#121212"/><circle cx="116" cy="125.8" r="1.9" fill="#9c9c9c" stroke="#2a2a2a" stroke-width="1"/></g><path d="M132,135.3 h5.4 l-2.7,3 z" fill="#000"/><rect x="147" y="124.5" width="1" height="24" fill="#b4ac9c"/><rect x="148" y="124.5" width="1" height="24" fill="#f6f6f6"/><path d="M165.5,135.5 h11 v7.5 h-11 z" fill="#fbe88a" stroke="#c89030" stroke-width="1"/><rect x="169.3" y="138" width="3.4" height="5" fill="#8a5a10"/><path d="M163.2,136.4 l7.8,-7.8 l7.8,7.8" fill="none" stroke="#a62424" stroke-width="1.9" stroke-linejoin="miter"/><rect x="190.5" y="126.5" width="100" height="20" fill="#ffffff" stroke="#cdc9b4" stroke-width="1"/><rect x="191.5" y="127.5" width="98" height="18" fill="none" stroke="#f0efe6" stroke-width="1"/><rect x="194" y="130" width="23" height="13" fill="#d9d9d9"/><rect x="274" y="128" width="15" height="17" rx="1.5" fill="#ebebe3" stroke="#dcdccf" stroke-width="1"/><path d="M277.6,134.4 l3.9,3.9 l3.9,-3.9" stroke="#c2c2b6" stroke-width="1.8" fill="none"/><path d="M308,127.7 h13 M304.5,131.2 v13.5 M304.5,135.7 h7 M304.5,143.7 h7 M317.5,135.7 h3.5 M317.5,143.7 h3.5" stroke="#155ea8" stroke-width="3" fill="none"/><path d="M308,127.7 h12.4 M304.5,131.2 v13 M304.5,135.7 h7 M304.5,143.7 h7 M317.5,135.7 h3 M317.5,143.7 h3" stroke="#5aa0e0" stroke-width="1.2" fill="none"/><rect x="301.5" y="124.7" width="6.4" height="6.4" fill="#ffffff" stroke="#155ea8" stroke-width="1.2"/><rect x="311.5" y="133" width="6.4" height="6.4" fill="#ffffff" stroke="#155ea8" stroke-width="1.2"/><rect x="311.5" y="140.7" width="6.4" height="6.4" fill="#ffffff" stroke="#155ea8" stroke-width="1.2"/><rect x="332" y="124.5" width="1" height="24" fill="#b4ac9c"/><rect x="333" y="124.5" width="1" height="24" fill="#f6f6f6"/><path d="M348.5,129.2 l15.5,7 l-15.5,6.8 z" fill="#d4d4d4" stroke="#b6b6b6" stroke-width="1" stroke-linejoin="round"/><path d="M371.8,135.4 h5.4 l-2.7,3 z" fill="#a0a0a0"/><polygon points="393,129 402.2,126.4 411.2,128.8 402.4,132.6" fill="#8cc6f0"/><polygon points="393,129 402.4,132.6 402.4,144.6 395.4,139.2" fill="#3c8edc"/><polygon points="402.4,132.6 411.2,128.8 409.2,139.4 402.4,144.6" fill="#1c5cb0"/><polygon points="432,126.4 441.2,123.8 450.2,126.2 441.4,130" fill="#8cc6f0"/><polygon points="432,126.4 441.4,130 441.4,142 434.4,136.6" fill="#3c8edc"/><polygon points="441.4,130 450.2,126.2 448.2,136.8 441.4,142" fill="#1c5cb0"/><rect x="426.7" y="135.7" width="10.8" height="10.8" fill="#58c404" stroke="#6e6e6e" stroke-width="1.2"/><path d="M453.8,134.2 h5.4 l-2.7,3 z" fill="#000"/><ellipse cx="483" cy="143" rx="5.6" ry="1.9" fill="#8c8c8c" stroke="#4a4a4a" stroke-width=".8"/><path d="M483,142 l-6.4,-7.6 l5.2,-7.4" fill="none" stroke="#4e4e4e" stroke-width="2.2"/><path d="M483,142 l-6.4,-7.6 l5.2,-7.4" fill="none" stroke="#c8c8c8" stroke-width=".8"/><path d="M481.5,126.2 q6,-2.8 10.6,1.6 l-5.6,8.6 q-5,-1 -5.6,-5 z" fill="#a8a8a8" stroke="#3c3c3c" stroke-width="1"/><ellipse cx="489.4" cy="132.4" rx="2.4" ry="4.6" transform="rotate(33 489.4 132.4)" fill="#ffd21a" stroke="#b88a08" stroke-width=".7"/><path d="M500,135.4 h5.4 l-2.7,3 z" fill="#000"/><rect x="522.5" y="128" width="15.5" height="15.5" fill="#fff" stroke="#5a5a5a" stroke-width="1.1"/><path d="M545.6,134.2 h5.4 l-2.7,3 z" fill="#000"/></svg><span class="abs" style="left:194px;top:130px;font-size:11px;line-height:13px;letter-spacing:-.25px">Viste</span>
<svg class="abs" style="left:0;top:0" width="1184" height="930" viewBox="0 0 1184 930"><path d="M845.5,250.6 L845.5,266.4 L849.4,262.7 L852.9,270.4 L855.6,269.2 L852.3,261.5 L857,261.5 Z" fill="#fff" stroke="#000" stroke-width="1.1" stroke-linejoin="miter"/></svg>
</body>
</html>
